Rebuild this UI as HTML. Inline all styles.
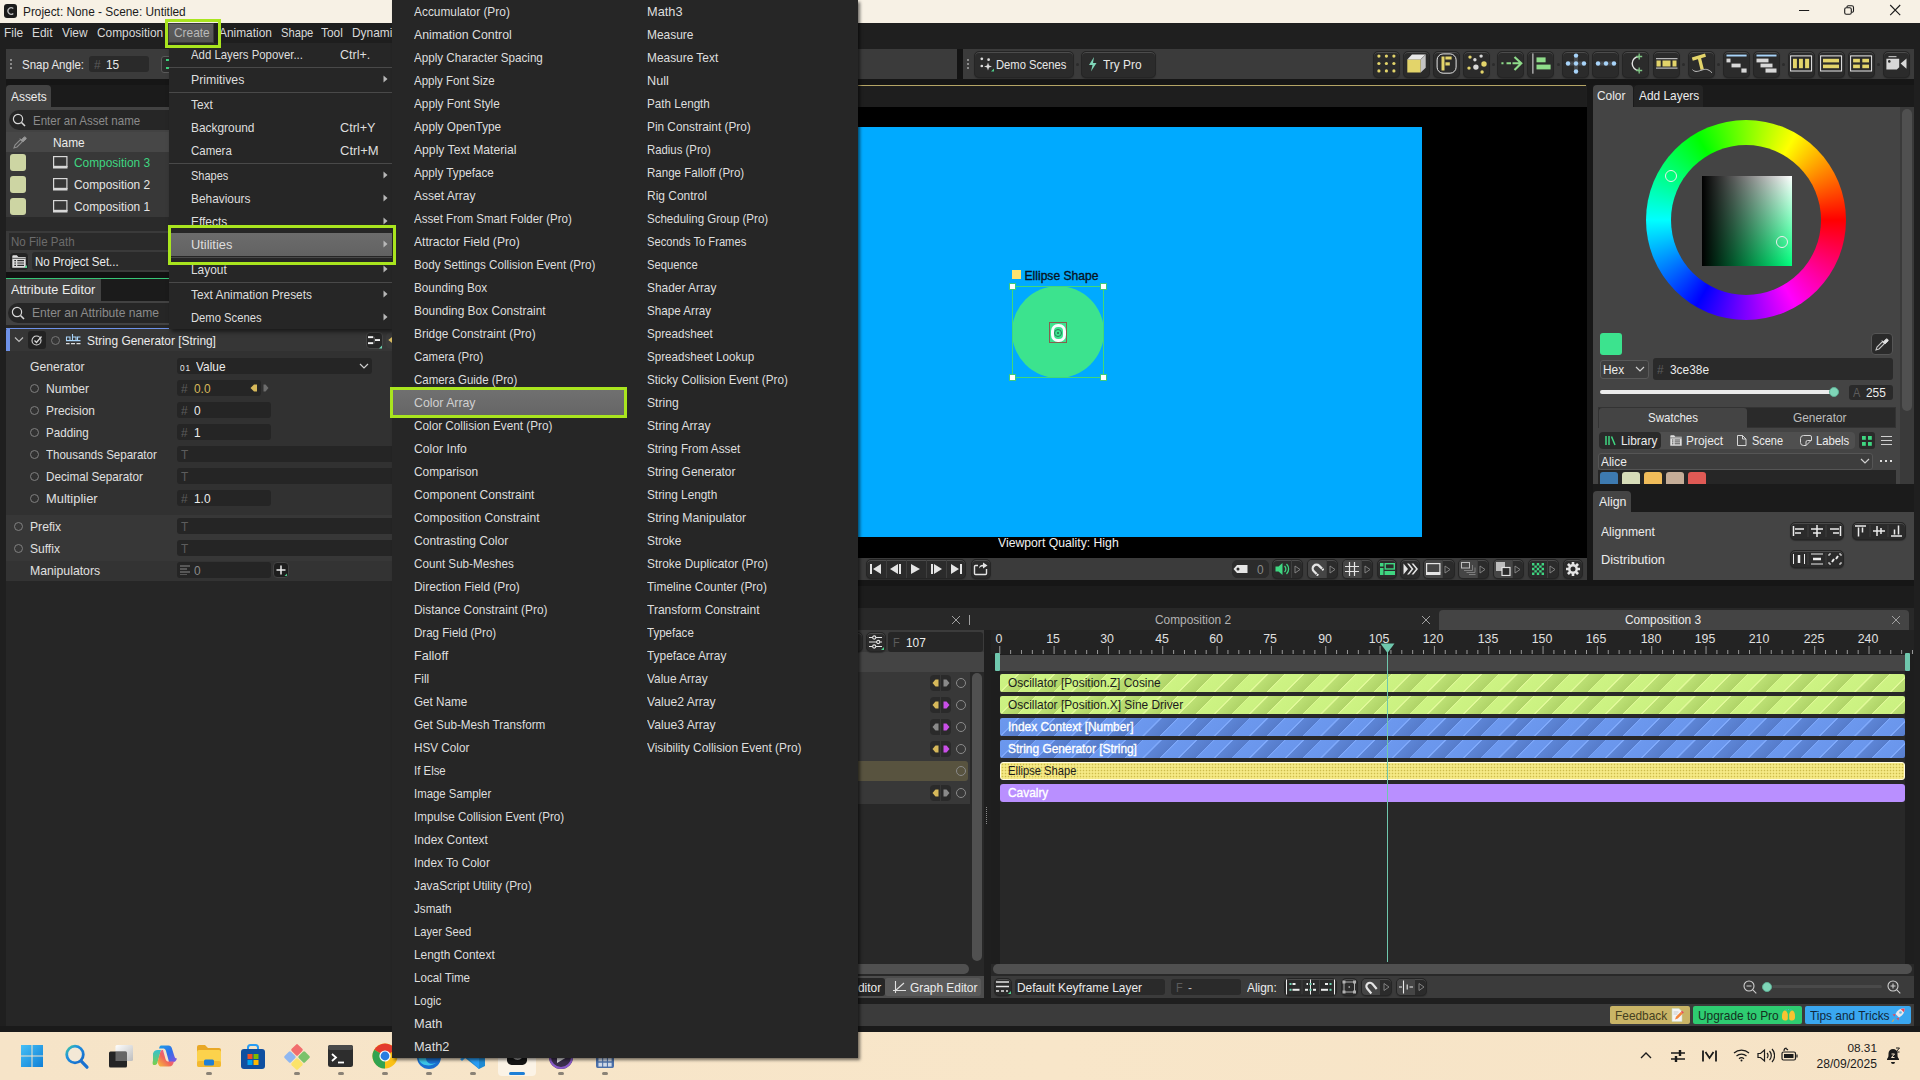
<!DOCTYPE html>
<html><head><meta charset="utf-8"><title>Cavalry</title>
<style>
*{box-sizing:border-box;margin:0;padding:0}
html,body{width:1920px;height:1080px;overflow:hidden;background:#1f1f1f;font-family:"Liberation Sans",sans-serif;font-size:13px;color:#e4e4e4}
.a{position:absolute}
.t{position:absolute;white-space:nowrap;line-height:16px;transform-origin:0 50%;transform:scaleX(.915);margin-top:1px}
</style></head><body>

<!-- ===== window background ===== -->
<div class="a" style="left:0;top:23px;width:1920px;height:1009px;background:#1f1f1f"></div>
<!-- title bar -->
<div class="a" style="left:0;top:0;width:1920px;height:23px;background:#f7f1e5"></div>
<svg class="a" style="left:4px;top:4px" width="13" height="14" viewBox="0 0 13 14"><rect x="0" y="0" width="13" height="14" rx="3" fill="#1b1b1b"/><path d="M9.3 4.6 A3.2 3.2 0 1 0 9.3 9.4" fill="none" stroke="#bbb" stroke-width="1.3"/></svg>
<div class="t" style="left:23px;top:3px;font-size:12.5px;color:#1b1b1b;transform:scaleX(0.948)">Project: None - Scene: Untitled</div>
<svg class="a" style="left:1797px;top:0px" width="110" height="20" viewBox="0 0 110 20" fill="none" stroke="#1b1b1b" stroke-width="1"><path d="M2 10.500h10.200"/><rect x="47.700" y="7.700" width="6.600" height="6.600" rx="1.600" stroke-width="1.100"/><path d="M50 7.200V6.900a1.200 1.200 0 0 1 1.200 -1.200h3.600a1.700 1.700 0 0 1 1.700 1.700v3.700a1.200 1.200 0 0 1 -1.200 1.200h-0.400" stroke-width="1.100"/><path d="M93.200 5l10 10.200M103.200 5l-10 10.200" stroke-width="1.100"/></svg>
<!-- menu bar -->
<div class="a" style="left:0;top:23px;width:1920px;height:20px;background:#1f1f1f"></div>
<div class="t mb" style="left:4px;top:24px">File</div>
<div class="t mb" style="left:32px;top:24px">Edit</div>
<div class="t mb" style="left:62px;top:24px">View</div>
<div class="t mb" style="left:97px;top:24px">Composition</div>
<div class="t mb" style="left:219px;top:24px">Animation</div>
<div class="t mb" style="left:281px;top:24px;transform:scaleX(0.86)">Shape</div>
<div class="t mb" style="left:321px;top:24px">Tool</div>
<div class="t mb" style="left:352px;top:24px">Dynami</div>
<!-- toolbars -->
<div class="a" style="left:6px;top:79px;width:1908px;height:6px;background:#161616"></div>
<div class="a" style="left:6px;top:49px;width:951px;height:30px;background:#3b3b3b"></div>
<div class="a" style="left:963px;top:49px;width:951px;height:30px;background:#3b3b3b"></div>
<div class="a" style="left:957px;top:49px;width:6px;height:30px;background:#141414"></div>
<!-- Snap angle -->
<div class="a" style="left:10px;top:59px;width:2px;height:2px;background:#8a8a8a;box-shadow:0 4px 0 #8a8a8a,0 8px 0 #8a8a8a"></div>
<div class="t" style="left:22px;top:56px;color:#e8e8e8;transform:scaleX(.885)">Snap Angle:</div>
<div class="a" style="left:89px;top:56px;width:60px;height:16px;background:#2a2a2a;border-radius:3px"></div>
<div class="t" style="left:94px;top:56px;color:#5a5a5a">#</div>
<div class="t" style="left:106px;top:56px;color:#e8e8e8">15</div>
<div class="a" style="left:161px;top:56px;width:20px;height:17px;border:1px solid #5a5a5a;border-radius:3px;background:#2c2c2c"></div>
<div class="a" style="left:166px;top:59px;width:3px;height:2px;background:#3fd681"></div><div class="a" style="left:166px;top:67px;width:3px;height:2px;background:#3fd681"></div>
<!-- Demo Scenes / Try Pro -->
<div class="a" style="left:967px;top:59px;width:2px;height:2px;background:#8a8a8a;box-shadow:0 4px 0 #8a8a8a,0 8px 0 #8a8a8a"></div>
<div class="a btn" style="left:974px;top:51px;width:100px;height:27px"></div>
<svg class="a" style="left:979px;top:56px" width="16" height="16" viewBox="0 0 16 16"><g fill="#dcdcdc"><circle cx="2.800" cy="2.800" r="1.350"/><circle cx="9.600" cy="3.700" r="1.350"/><circle cx="2.800" cy="10" r="1.350"/><path d="M9 6.500l1 3 3 1-3 1-1 3-1-3-3-1 3-1z"/></g><path d="M15 12.500v3h-3z" fill="#4fd08d"/></svg>
<div class="t" style="left:996px;top:56px;color:#e8e8e8;transform:scaleX(0.862)">Demo Scenes</div>
<div class="a" style="left:1076px;top:63px;width:3px;height:3px;border-radius:2px;background:#2b2b2b"></div>
<div class="a btn" style="left:1081px;top:51px;width:75px;height:27px"></div>
<svg class="a" style="left:1088px;top:57px" width="10" height="15" viewBox="0 0 10 15"><path d="M6 0L1 8h3.500L3 14.500 8.500 6H5z" fill="#7fd6b8"/></svg>
<div class="t" style="left:1103px;top:56px;color:#e8e8e8">Try Pro</div>
<style>
.mb{color:#d9d9d9;font-size:13px}
.btn{background:#2b2b2b;border:1px solid #252525;border-radius:5px;box-shadow:inset 0 1px 0 #4c4c4c,0 1px 1px #2e2e2e}
.mi{color:#dedede;font-size:13px}
</style>

<!-- ===== LEFT PANEL ===== -->
<!-- Assets tab -->
<div class="a" style="left:6px;top:85px;width:400px;height:22px;background:#1b1b1b"></div>
<div class="a" style="left:6px;top:85px;width:45px;height:22px;background:#424242;border-radius:4px 4px 0 0"></div>
<div class="t" style="left:11px;top:88px;color:#ececec">Assets</div>
<div class="a" style="left:6px;top:107px;width:400px;height:111px;background:#424242"></div>
<!-- search -->
<div class="a" style="left:9px;top:110px;width:400px;height:20px;background:#262626;border-radius:10px"></div>
<svg class="a" style="left:12px;top:113px" width="15" height="15" viewBox="0 0 15 15"><circle cx="6" cy="6" r="4.600" fill="none" stroke="#d8d8d8" stroke-width="1.200"/><path d="M9.500 9.500l3.500 3.500" stroke="#d8d8d8" stroke-width="1.600"/></svg>
<div class="t" style="left:33px;top:112px;color:#8b8b8b;transform:scaleX(0.888)">Enter an Asset name</div>
<!-- header -->
<div class="a" style="left:6px;top:132px;width:400px;height:20px;background:#474747"></div>
<svg class="a" style="left:13px;top:135px" width="14" height="14" viewBox="0 0 14 14"><path d="M1 13l1-3 5.500-5.500 2 2L4 12z" fill="none" stroke="#8d8d8d" stroke-width="1.100"/><path d="M7 3.500l3.500 3.500M8.500 5l2.200-2.600a1.400 1.400 0 0 1 2 2L10 6.500z" fill="#9a9a9a" stroke="#9a9a9a" stroke-width="1"/></svg>
<div class="t" style="left:53px;top:134px;color:#ececec">Name</div>
<!-- rows -->
<div class="a" style="left:6px;top:152px;width:400px;height:65px;background:#383838"></div>
<div class="a sw" style="left:10px;top:154px"></div>
<div class="a sw" style="left:10px;top:176px"></div>
<div class="a sw" style="left:10px;top:198px"></div>
<svg class="a" style="left:53px;top:156px" width="15" height="13" viewBox="0 0 15 13"><rect x="0.600" y="0.600" width="13.300" height="9.800" fill="none" stroke="#d8d8d8" stroke-width="1.200"/><rect x="0" y="10" width="14.500" height="2.500" fill="#d8d8d8"/></svg>
<svg class="a" style="left:53px;top:178px" width="15" height="13" viewBox="0 0 15 13"><rect x="0.600" y="0.600" width="13.300" height="9.800" fill="none" stroke="#d8d8d8" stroke-width="1.200"/><rect x="0" y="10" width="14.500" height="2.500" fill="#d8d8d8"/></svg>
<svg class="a" style="left:53px;top:200px" width="15" height="13" viewBox="0 0 15 13"><rect x="0.600" y="0.600" width="13.300" height="9.800" fill="none" stroke="#d8d8d8" stroke-width="1.200"/><rect x="0" y="10" width="14.500" height="2.500" fill="#d8d8d8"/></svg>
<div class="t" style="left:74px;top:154px;color:#3fd681">Composition 3</div>
<div class="t" style="left:74px;top:176px;color:#e6e6e6">Composition 2</div>
<div class="t" style="left:74px;top:198px;color:#e6e6e6">Composition 1</div>
<div class="a" style="left:6px;top:217px;width:400px;height:55px;background:#2a2a2a"></div>
<!-- file path -->
<div class="a" style="left:6px;top:231px;width:400px;height:41px;background:#3a3a3a"></div>
<div class="a" style="left:9px;top:233px;width:400px;height:17px;background:#2a2a2a"></div>
<div class="t" style="left:11px;top:233px;color:#6c6c6c;transform:scaleX(0.889)">No File Path</div>
<div class="a" style="left:9px;top:252px;width:20px;height:19px;background:#232323;border:1px solid #3c3c3c;border-radius:4px"></div>
<svg class="a" style="left:12px;top:255px" width="15" height="13" viewBox="0 0 15 13"><path d="M0.300 12.700V1.300a1 1 0 0 1 1-1h3.500l1.500 1.700h7.400v10.700z" fill="#dedede"/><path d="M0.300 3.300h13.400" stroke="#2a2a2a" stroke-width=".8"/><path d="M2.300 5.700h1.700M5.300 5.700h6.700M2.300 8h1.700M5.300 8h6.700M2.300 10.300h1.700M5.300 10.300h6.700" stroke="#2a2a2a" stroke-width="1.200"/><path d="M15 10V13h-3z" fill="#4fd08d"/></svg>
<div class="a" style="left:32px;top:252px;width:380px;height:18px;background:#2a2a2a;border-radius:3px"></div>
<div class="t" style="left:35px;top:253px;color:#ececec;transform:scaleX(0.884)">No Project Set...</div>
<!-- Attribute Editor -->
<div class="a" style="left:6px;top:272px;width:400px;height:6px;background:#121212"></div>
<div class="a" style="left:6px;top:278px;width:400px;height:1px;background:#36c576"></div>
<div class="a" style="left:6px;top:279px;width:400px;height:22px;background:#1b1b1b"></div>
<div class="a" style="left:6px;top:279px;width:95px;height:22px;background:#424242"></div>
<div class="t" style="left:11px;top:281px;color:#ececec;transform:scaleX(0.98)">Attribute Editor</div>
<div class="a" style="left:6px;top:301px;width:400px;height:731px;background:#262626"></div>
<div class="a" style="left:6px;top:301px;width:400px;height:24px;background:#424242"></div>
<div class="a" style="left:8px;top:303px;width:400px;height:20px;background:#262626;border-radius:10px"></div>
<svg class="a" style="left:11px;top:306px" width="15" height="15" viewBox="0 0 15 15"><circle cx="6" cy="6" r="4.600" fill="none" stroke="#d8d8d8" stroke-width="1.200"/><path d="M9.500 9.500l3.500 3.500" stroke="#d8d8d8" stroke-width="1.600"/></svg>
<div class="t" style="left:32px;top:304px;color:#8b8b8b;transform:scaleX(0.93)">Enter an Attribute name</div>
<!-- String Generator header row -->
<div class="a" style="left:6px;top:328px;width:400px;height:23px;background:#363636;border-top:1px solid #6e92e8"></div>
<div class="a" style="left:6px;top:328px;width:4px;height:23px;background:#6e92e8;border-radius:3px 0 0 0"></div>
<svg class="a" style="left:14px;top:336px" width="10" height="8" viewBox="0 0 10 8"><path d="M1 1.500l4 4 4-4" fill="none" stroke="#bdbdbd" stroke-width="1.200"/></svg>
<div class="a" style="left:28px;top:331px;width:18px;height:18px;background:#222;border-radius:3px"></div>
<svg class="a" style="left:31px;top:334px" width="12" height="12" viewBox="0 0 12 12"><circle cx="5.500" cy="6.500" r="4.500" fill="none" stroke="#d8d8d8" stroke-width="1.100"/><path d="M3.500 6.500l2 2 5-6" fill="none" stroke="#d8d8d8" stroke-width="1.300"/></svg>
<div class="a" style="left:50.500px;top:335.500px;width:9px;height:9px;border:1.200px solid #777;border-radius:5px"></div>
<svg class="a" style="left:65px;top:333px" width="16" height="13" viewBox="0 0 16 13" fill="none"><path d="M5 3.500v4M5 4h-3.500v3.500h3.500M7.500 1v6.500h3.500v-3.500h-3.500M15.500 4h-3v3.500h3M1 7.600h14.500" stroke="#a8d4fa" stroke-width="1.100"/><path d="M1 10.600h3.600M6 10.600h4M11.500 10.600h4" stroke="#dcdcdc" stroke-width="1.100"/></svg>
<div class="t" style="left:87px;top:332px;color:#ececec">String Generator [String]</div>
<div class="a" style="left:365.500px;top:331.500px;width:17px;height:17px;background:#262626;border:1px solid #454545;border-radius:4px"></div>
<svg class="a" style="left:367px;top:335px" width="16" height="14" viewBox="0 0 16 14"><rect x="1" y="1.200" width="5.200" height="1.900" fill="#f0f0f0"/><rect x="1" y="7.200" width="5.200" height="1.900" fill="#f0f0f0"/><rect x="8" y="4.100" width="5" height="1.900" fill="#f0f0f0"/><path d="M6.300 2.200h1v6h-1" fill="none" stroke="#6a6a6a" stroke-width=".8"/><path d="M15 10.500V13.500h-3z" fill="#6fd6b4"/></svg>
<div class="a" style="left:386px;top:332px;width:12px;height:17px;background:#3a3a3a;border-radius:5px 0 0 5px"></div>
<svg class="a" style="left:388px;top:336px" width="6" height="8" viewBox="0 0 6 8"><path d="M5 0.300v7.400L0.300 4z" fill="#d9bd62"/></svg>
<!-- attr body -->
<div class="a" style="left:6px;top:351px;width:400px;height:164px;background:#313131"></div>
<div class="a" style="left:6px;top:515px;width:400px;height:46px;background:#373737"></div>
<div class="a" style="left:6px;top:561px;width:400px;height:20px;background:#333"></div>
<div class="t al" style="left:30px;top:358px;transform:scaleX(0.932)">Generator</div>
<div class="t al" style="left:46px;top:380px;transform:scaleX(0.93)">Number</div>
<div class="t al" style="left:46px;top:402px">Precision</div>
<div class="t al" style="left:46px;top:424px;transform:scaleX(0.894)">Padding</div>
<div class="t al" style="left:46px;top:446px;transform:scaleX(0.886)">Thousands Separator</div>
<div class="t al" style="left:46px;top:468px;transform:scaleX(0.9)">Decimal Separator</div>
<div class="t al" style="left:46px;top:490px;transform:scaleX(0.992)">Multiplier</div>
<div class="t al" style="left:30px;top:518px;transform:scaleX(0.936)">Prefix</div>
<div class="t al" style="left:30px;top:540px;transform:scaleX(0.927)">Suffix</div>
<div class="t al" style="left:30px;top:562px;transform:scaleX(0.942)">Manipulators</div>
<div class="a rd" style="left:30px;top:384px"></div>
<div class="a rd" style="left:30px;top:406px"></div>
<div class="a rd" style="left:30px;top:428px"></div>
<div class="a rd" style="left:30px;top:450px"></div>
<div class="a rd" style="left:30px;top:472px"></div>
<div class="a rd" style="left:30px;top:494px"></div>
<div class="a rd" style="left:14px;top:522px"></div>
<div class="a rd" style="left:14px;top:544px"></div>
<!-- fields -->
<div class="a fd" style="left:177px;top:358px;width:195px"></div>
<div class="t" style="left:180px;top:359px;color:#e8e8e8;font-size:9px;letter-spacing:1px">01</div>
<div class="t" style="left:196px;top:358px;color:#ececec">Value</div>
<svg class="a" style="left:359px;top:363px" width="10" height="7" viewBox="0 0 10 7"><path d="M1 1l4 4 4-4" fill="none" stroke="#d0d0d0" stroke-width="1.200"/></svg>
<div class="a fd" style="left:177px;top:380px;width:84px"></div>
<div class="t hs" style="left:181px;top:380px">#</div><div class="t" style="left:194px;top:380px;color:#d6b85a">0.0</div>
<svg class="a" style="left:250px;top:384px" width="8" height="8" viewBox="0 0 8 8"><path d="M7 0.500v7H4L0.500 4 4 0.500z" fill="#d6b85a"/></svg>
<svg class="a" style="left:263px;top:384px" width="6" height="8" viewBox="0 0 6 8"><path d="M0.500 0.500v7h2L5.500 4 2.500 0.500z" fill="#6c6c6c"/></svg>
<div class="a fd" style="left:177px;top:402px;width:94px"></div>
<div class="t hs" style="left:181px;top:402px">#</div><div class="t" style="left:194px;top:402px;color:#ececec">0</div>
<div class="a fd" style="left:177px;top:424px;width:94px"></div>
<div class="t hs" style="left:181px;top:424px">#</div><div class="t" style="left:194px;top:424px;color:#ececec">1</div>
<div class="a fd" style="left:177px;top:446px;width:240px"></div>
<div class="t hs" style="left:181px;top:446px">T</div>
<div class="a fd" style="left:177px;top:468px;width:240px"></div>
<div class="t hs" style="left:181px;top:468px">T</div>
<div class="a fd" style="left:177px;top:490px;width:94px"></div>
<div class="t hs" style="left:181px;top:490px">#</div><div class="t" style="left:194px;top:490px;color:#ececec">1.0</div>
<div class="a fd" style="left:177px;top:518px;width:240px"></div>
<div class="t hs" style="left:181px;top:518px">T</div>
<div class="a fd" style="left:177px;top:540px;width:240px"></div>
<div class="t hs" style="left:181px;top:540px">T</div>
<div class="a fd" style="left:177px;top:562px;width:94px"></div>
<svg class="a" style="left:180px;top:565px" width="10" height="10" viewBox="0 0 10 10"><path d="M0 1h10M0 4h7M0 7h10M0 10h7" stroke="#8a8a8a" stroke-width="1"/></svg>
<div class="t" style="left:194px;top:562px;color:#8a8a8a">0</div>
<div class="a" style="left:273px;top:562px;width:16px;height:16px;background:#1e1e1e;border:1px solid #444;border-radius:4px"></div>
<svg class="a" style="left:276px;top:565px" width="11" height="11" viewBox="0 0 11 11"><path d="M5 0.500v9M0.500 5h9" stroke="#eee" stroke-width="1.500"/><path d="M11 8.500V11h-2.500z" fill="#4fd08d"/></svg>
<style>
.sw{width:16px;height:17px;background:#cdd5a3;border-radius:3px}
.al{color:#e0e0e0}
.rd{width:9px;height:9px;border:1px solid #808080;border-radius:5px}
.fd{height:16px;background:#252525;border-radius:3px}
.hs{color:#5c5c5c;font-size:13px}
</style>

<!-- ===== VIEWPORT ===== -->
<div class="a" style="left:1587px;top:85px;width:6px;height:495px;background:#171717"></div>
<div class="a" style="left:858px;top:580px;width:1056px;height:6px;background:#161616"></div>
<div class="a" style="left:858px;top:586px;width:1056px;height:22px;background:#1c1c1c"></div>

<div class="a" style="left:858px;top:85px;width:728px;height:1px;background:#b5a566"></div>
<div class="a" style="left:858px;top:86px;width:728px;height:21px;background:#1e1e1e"></div>
<div class="a" style="left:858px;top:107px;width:729px;height:451px;background:#000"></div>
<div class="a" style="left:858px;top:127px;width:564px;height:410px;background:#00aaff"></div>
<!-- ellipse -->
<div class="a" style="left:1012px;top:286px;width:91.500px;height:91.500px;border-radius:46px;background:#3ce38e"></div>
<div class="a" style="left:1012px;top:286px;width:92px;height:92px;border:1px solid #40d878"></div>
<div class="a hd" style="left:1009px;top:283px"></div><div class="a hd" style="left:1100px;top:283px"></div>
<div class="a hd" style="left:1009px;top:374px"></div><div class="a hd" style="left:1100px;top:374px"></div>
<div class="a" style="left:1012px;top:270px;width:9px;height:9px;background:#ffe36e"></div>
<div class="t" style="left:1024.500px;top:267px;color:#08141f;font-size:12.100px;transform:none;-webkit-text-stroke:.35px #08141f">Ellipse Shape</div>
<div class="a" style="left:1049px;top:322px;width:18px;height:21px;background:#3ce38e;border:1px solid #86604e"></div>
<div class="a" style="left:1050.500px;top:323.500px;width:15px;height:18px;border:3px solid #fbfbff;border-radius:7px;background:#3ce38e"></div>
<div class="a" style="left:1054px;top:328.500px;width:8px;height:8px;border:1px solid #2a7a5a;border-radius:4px"></div>
<div class="a" style="left:1057px;top:331.500px;width:2px;height:2px;background:#2a6a50;border-radius:1px"></div>
<div class="t" style="left:998px;top:534px;color:#f2f2f2;transform:scaleX(.94)">Viewport Quality: High</div>
<!-- controls bar -->
<div class="a" style="left:858px;top:558px;width:729px;height:22px;background:#3b3b3b"></div>
<div class="a btn" style="left:866px;top:559px;width:100px;height:20px"></div>
<div class="a" style="left:886px;top:560px;width:1px;height:18px;background:#3e3e3e;box-shadow:20px 0 0 #3e3e3e,40px 0 0 #3e3e3e,60px 0 0 #3e3e3e"></div>
<svg class="a" style="left:866px;top:559px" width="100" height="20" viewBox="0 0 100 20" fill="#e4e4e4"><path d="M4 5h2v10H4zM15 5v10L7 10z"/><path d="M35 5h-2v10h2zM32 5v10L24 10z"/><path d="M45 5v10l9-5z"/><path d="M65 5h2v10h-2zM68 5v10l8-5z"/><path d="M94 5h2v10h-2zM85 5v10l8-5z"/></svg>
<div class="a btn" style="left:971px;top:559px;width:20px;height:20px"></div>
<svg class="a" style="left:973px;top:562px" width="16" height="14" viewBox="0 0 16 14"><path d="M5 3.500H2.500a1 1 0 0 0-1 1v7a1 1 0 0 0 1 1h10a1 1 0 0 0 1-1V7" fill="none" stroke="#e4e4e4" stroke-width="1.400"/><path d="M6 6.500c0-2.500 1.500-3.800 4-3.800V0.500L14.500 3.500 10 6.500V4.500c-2 0-3 .5-4 2z" fill="#e4e4e4"/></svg>
<!-- right group -->
<div class="a btn" style="left:1232px;top:560px;width:37px;height:18px;border-color:#2b2b2b;box-shadow:none"></div>
<svg class="a" style="left:1233px;top:564px" width="15" height="10" viewBox="0 0 15 10"><path d="M0.500 5L4 1h10.500v8H4z" fill="#e4e4e4"/><circle cx="5" cy="5" r="1.500" fill="#2b2b2b"/></svg>
<div class="t" style="left:1257px;top:561px;color:#8a8a8a">0</div>
<div class="a btn" style="left:1272px;top:559px;width:31px;height:20px"></div><div class="a vs" style="left:1291px;top:560px"></div>
<svg class="a" style="left:1275px;top:562px" width="15" height="14" viewBox="0 0 15 14"><path d="M0.500 4.500h3L7.500 1v12l-4-3.500h-3z" fill="#3fd681"/><path d="M9.500 4a4 4 0 0 1 0 6M11.500 2a7 7 0 0 1 0 10" fill="none" stroke="#3fd681" stroke-width="1.300"/></svg>
<div class="a btn" style="left:1307px;top:559px;width:31px;height:20px"></div><div class="a" style="left:1308px;top:560px;width:18px;height:18px;background:#454545;border-radius:4px 0 0 4px"></div><div class="a vs" style="left:1326px;top:560px"></div>
<svg class="a" style="left:1310px;top:562px" width="14" height="14" viewBox="0 0 14 14"><g transform="rotate(-45 7 7)" fill="none"><path d="M3.200 12.500V6.300a3.800 3.800 0 0 1 7.600 0V12.500" stroke="#e4e4e4" stroke-width="2.300"/><path d="M2 10.500h2.400M9.600 10.500h2.400" stroke="#454545" stroke-width=".7"/></g></svg>
<div class="a btn" style="left:1342px;top:559px;width:31px;height:20px"></div><div class="a" style="left:1343px;top:560px;width:18px;height:18px;background:#454545;border-radius:4px 0 0 4px"></div><div class="a vs" style="left:1361px;top:560px"></div>
<svg class="a" style="left:1345px;top:562px" width="14" height="14" viewBox="0 0 14 14"><path d="M4.500 0v14M9.500 0v14M0 4.500h14M0 9.500h14" stroke="#e4e4e4" stroke-width="1.200"/></svg>
<div class="a btn" style="left:1377px;top:559px;width:20px;height:20px"></div>
<svg class="a" style="left:1380px;top:563px" width="15" height="12" viewBox="0 0 15 12"><rect x="0" y="0" width="3.500" height="3.500" fill="#3fd681"/><rect x="0" y="5" width="3.500" height="7" fill="#3fd681"/><rect x="5.200" y="0.700" width="9.100" height="5.300" fill="none" stroke="#3fd681" stroke-width="1.400"/><rect x="4.500" y="8" width="10.500" height="4" fill="#3fd681"/></svg>
<div class="a btn" style="left:1400px;top:559px;width:20px;height:20px"></div>
<svg class="a" style="left:1403px;top:563px" width="15" height="12" viewBox="0 0 15 12"><path d="M0.500 0.500L5 6 0.500 11.500zM4 0.500h2L10.500 6 6 11.500H4L8.500 6zM8.500 0.500h2L15 6l-4.500 5.500h-2L13 6z" fill="#e4e4e4"/></svg>
<div class="a btn" style="left:1423px;top:559px;width:32px;height:20px"></div><div class="a" style="left:1424px;top:560px;width:18px;height:18px;background:#454545;border-radius:4px 0 0 4px"></div><div class="a vs" style="left:1442px;top:560px"></div>
<svg class="a" style="left:1426px;top:563px" width="15" height="12" viewBox="0 0 15 12"><rect x="0.600" y="0.600" width="13.300" height="9" fill="none" stroke="#e4e4e4" stroke-width="1.200"/><rect x="0" y="9.500" width="14.500" height="2.500" fill="#e4e4e4"/></svg>
<div class="a btn" style="left:1458px;top:559px;width:31px;height:20px"></div><div class="a" style="left:1459px;top:560px;width:18px;height:18px;background:#454545;border-radius:4px 0 0 4px"></div><div class="a vs" style="left:1477px;top:560px"></div>
<svg class="a" style="left:1461px;top:562px" width="15" height="13" viewBox="0 0 15 13" fill="none"><rect x="0.500" y="0.500" width="8" height="5.500" stroke="#bdbdbd"/><path d="M3 8.500h8.500V3M5.500 10.500H14V5.500M8 12.500h6.500" stroke="#7e7e7e"/></svg>
<div class="a btn" style="left:1493px;top:559px;width:31px;height:20px"></div><div class="a" style="left:1494px;top:560px;width:18px;height:18px;background:#454545;border-radius:4px 0 0 4px"></div><div class="a vs" style="left:1512px;top:560px"></div>
<svg class="a" style="left:1496px;top:562px" width="15" height="14" viewBox="0 0 15 14"><rect x="0" y="0" width="9" height="9" fill="#bdbdbd"/><rect x="6" y="5.500" width="8" height="8" fill="#2b2b2b" stroke="#e4e4e4" stroke-width="1.200"/></svg>
<div class="a btn" style="left:1528px;top:559px;width:31px;height:20px"></div><div class="a vs" style="left:1547px;top:560px"></div>
<svg class="a" style="left:1532px;top:563px" width="12" height="12" viewBox="0 0 12 12" fill="#3fd681"><path d="M0 0h2.400v2.400H0zM4.800 0h2.400v2.400H4.800zM9.600 0H12v2.400H9.600zM2.400 2.400h2.400v2.400H2.400zM7.200 2.400h2.400v2.400H7.200zM0 4.800h2.400v2.400H0zM4.800 4.800h2.400v2.400H4.800zM9.600 4.800H12v2.400H9.600zM2.400 7.200h2.400v2.400H2.400zM7.200 7.200h2.400v2.400H7.200zM0 9.600h2.400V12H0zM4.800 9.600h2.400V12H4.800zM9.600 9.600H12V12H9.600z"/></svg>
<div class="a btn" style="left:1563px;top:559px;width:20px;height:20px"></div>
<svg class="a" style="left:1566px;top:562px" width="14" height="14" viewBox="0 0 14 14"><g fill="#e4e4e4"><rect x="5.700" y="-0.200" width="2.600" height="3.400" rx=".5" transform="rotate(0 7 7)"/><rect x="5.700" y="-0.200" width="2.600" height="3.400" rx=".5" transform="rotate(45 7 7)"/><rect x="5.700" y="-0.200" width="2.600" height="3.400" rx=".5" transform="rotate(90 7 7)"/><rect x="5.700" y="-0.200" width="2.600" height="3.400" rx=".5" transform="rotate(135 7 7)"/><rect x="5.700" y="-0.200" width="2.600" height="3.400" rx=".5" transform="rotate(180 7 7)"/><rect x="5.700" y="-0.200" width="2.600" height="3.400" rx=".5" transform="rotate(225 7 7)"/><rect x="5.700" y="-0.200" width="2.600" height="3.400" rx=".5" transform="rotate(270 7 7)"/><rect x="5.700" y="-0.200" width="2.600" height="3.400" rx=".5" transform="rotate(315 7 7)"/></g><circle cx="7" cy="7" r="3.700" fill="none" stroke="#e4e4e4" stroke-width="2.400"/></svg>
<svg class="a" style="left:1294px;top:565px" width="262" height="9" viewBox="0 0 262 9" fill="none" stroke="#8a8a8a" stroke-width="0.900"><path d="M1 1v7l5-3.500z"/><path d="M36 1v7l5-3.500z"/><path d="M71 1v7l5-3.500z"/><path d="M151 1v7l5-3.500z"/><path d="M186 1v7l5-3.500z"/><path d="M221 1v7l5-3.500z"/><path d="M256 1v7l5-3.500z"/></svg>
<style>
.hd{width:7px;height:7px;background:#fff;border:1px solid #3ec97d}
.vs{width:1px;height:18px;background:#3e3e3e}
</style>

<!-- ===== RIGHT PANEL ===== -->
<div class="a" style="left:1593px;top:85px;width:321px;height:22px;background:#1b1b1b"></div>
<div class="a" style="left:1593px;top:85px;width:40px;height:22px;background:#444;border-radius:4px 4px 0 0"></div>
<div class="a" style="left:1634px;top:85px;width:69px;height:22px;background:#242424;border-radius:4px 4px 0 0"></div>
<div class="t" style="left:1597px;top:87px;color:#ececec">Color</div>
<div class="t" style="left:1639px;top:87px;color:#ececec">Add Layers</div>
<div class="a" style="left:1593px;top:107px;width:307px;height:378px;background:#444"></div>
<div class="a" style="left:1900px;top:107px;width:14px;height:378px;background:#3a3a3a"></div>
<div class="a" style="left:1902px;top:109px;width:10px;height:302px;background:#505050;border-radius:5px"></div>
<!-- color wheel -->
<div class="a" style="left:1646px;top:120px;width:200px;height:200px;border-radius:100px;background:conic-gradient(from 90deg,#ff0000,#ff00ff,#0000ff,#00ffff,#00ff00,#ffff00,#ff0000)"></div>
<div class="a" style="left:1671px;top:145px;width:150px;height:150px;border-radius:75px;background:#444"></div>
<div class="a" style="left:1702px;top:176px;width:90px;height:90px;background:linear-gradient(to right,#000,rgba(0,0,0,0)),linear-gradient(to bottom,#fff,#00ff7d)"></div>
<div class="a" style="left:1665px;top:170px;width:12px;height:12px;border:1px solid #eee;border-radius:6px"></div>
<div class="a" style="left:1776px;top:236px;width:12px;height:12px;border:1px solid #eee;border-radius:6px"></div>
<!-- swatch + eyedropper -->
<div class="a" style="left:1600px;top:333px;width:22px;height:22px;border-radius:3px;background:#3ce38e"></div>
<div class="a" style="left:1871px;top:333px;width:22px;height:22px;border-radius:4px;background:#2a2a2a;border:1px solid #555"></div>
<svg class="a" style="left:1875px;top:337px" width="14" height="14" viewBox="0 0 14 14"><path d="M1 13l1-3 5.500-5.500 2 2L4 12z" fill="none" stroke="#c8c8c8" stroke-width="1.100"/><path d="M7 3.500l3.500 3.500M8.500 5l2.200-2.600a1.400 1.400 0 0 1 2 2L10 6.500z" fill="#e4e4e4" stroke="#e4e4e4" stroke-width="1"/></svg>
<!-- hex -->
<div class="a" style="left:1600px;top:360px;width:49px;height:19px;background:#3d3d3d;border:1px solid #595959;border-radius:3px"></div>
<div class="t" style="left:1603px;top:361px;color:#ececec">Hex</div>
<svg class="a" style="left:1635px;top:366px" width="10" height="7" viewBox="0 0 10 7"><path d="M1 1l4 4 4-4" fill="none" stroke="#d0d0d0" stroke-width="1.200"/></svg>
<div class="a" style="left:1653px;top:358px;width:240px;height:22px;background:#2a2a2a;border-radius:3px"></div>
<div class="t hs" style="left:1657px;top:361px">#</div>
<div class="t" style="left:1670px;top:361px;color:#ececec">3ce38e</div>
<!-- alpha slider -->
<div class="a" style="left:1600px;top:390px;width:234px;height:4px;border-radius:2px;background:#ececec"></div>
<div class="a" style="left:1829px;top:387px;width:10px;height:10px;border-radius:5px;background:#7fd6b8;border:1.500px solid #5fae94"></div>
<div class="a" style="left:1849px;top:385px;width:44px;height:15px;background:#2a2a2a;border-radius:3px"></div>
<div class="t hs" style="left:1853px;top:384px;font-size:12px">A</div>
<div class="t" style="left:1866px;top:384px;color:#ececec">255</div>
<!-- swatches tabs -->
<div class="a" style="left:1598px;top:407px;width:298px;height:21px;background:#2a2a2a;border:1px solid #333"></div>
<div class="a" style="left:1599px;top:408px;width:148px;height:20px;background:#444;border-radius:3px 3px 0 0"></div>
<div class="t" style="left:1648px;top:409px;color:#ececec;transform:scaleX(0.887)">Swatches</div>
<div class="t" style="left:1793px;top:409px;color:#bdbdbd">Generator</div>
<!-- library row -->
<div class="a" style="left:1599px;top:432px;width:256px;height:17px;background:#4f4f4f;border-radius:4px"></div>
<div class="a" style="left:1599px;top:432px;width:62px;height:17px;background:#2a2a2a;border-radius:4px"></div>
<svg class="a" style="left:1605px;top:435px" width="11" height="11" viewBox="0 0 11 11"><path d="M1 1v9M4 1v9M6.500 1.500L10 10" stroke="#3fd681" stroke-width="1.500"/></svg>
<div class="t" style="left:1621px;top:432px;color:#ececec">Library</div>
<svg class="a" style="left:1670px;top:435px" width="12" height="11" viewBox="0 0 12 11"><path d="M0.300 10.700V1.100a.8.800 0 0 1 .8-.8h3l1.200 1.400h6.400v9z" fill="#dedede"/><path d="M0.300 2.900h11.400" stroke="#4f4f4f" stroke-width=".7"/><path d="M2 5h1.400M4.600 5h5.400M2 6.900h1.400M4.600 6.900h5.400M2 8.800h1.400M4.600 8.800h5.400" stroke="#4f4f4f" stroke-width="1"/></svg>
<div class="t" style="left:1686px;top:432px;color:#ececec">Project</div>
<svg class="a" style="left:1737px;top:435px" width="10" height="11" viewBox="0 0 10 11"><path d="M0.500 0.500h5L9 4v6.500H0.500zM5.500 0.500V4H9" fill="none" stroke="#d6d6d6" stroke-width="1"/></svg>
<div class="t" style="left:1752px;top:432px;color:#ececec;transform:scaleX(0.842)">Scene</div>
<svg class="a" style="left:1800px;top:435px" width="12" height="11" viewBox="0 0 12 11"><path d="M3.500 0.500h6.500a1.500 1.500 0 0 1 1.500 1.500v3L6 10.500H3.500a3 3 0 0 1-3-3v-4a3 3 0 0 1 3-3zM6 10.500V7a1.500 1.500 0 0 1 1.500-1.500h4" fill="none" stroke="#d6d6d6" stroke-width="1"/></svg>
<div class="t" style="left:1816px;top:432px;color:#ececec;transform:scaleX(0.868)">Labels</div>
<div class="a" style="left:1859px;top:432px;width:16px;height:17px;background:#2a2a2a;border-radius:3px"></div>
<svg class="a" style="left:1862px;top:436px" width="10" height="10" viewBox="0 0 10 10" fill="#3fd681"><rect x="0" y="0" width="3.800" height="3.800"/><rect x="6" y="0" width="3.800" height="3.800"/><rect x="0" y="6" width="3.800" height="3.800"/><rect x="6" y="6" width="3.800" height="3.800"/></svg>
<svg class="a" style="left:1881px;top:436px" width="11" height="9" viewBox="0 0 11 9"><path d="M0 0.500h11M0 4.500h11M0 8.500h11" stroke="#d0d0d0" stroke-width="1"/></svg>
<!-- Alice -->
<div class="a" style="left:1598px;top:453px;width:275px;height:17px;background:#3d3d3d;border:1px solid #555;border-radius:3px"></div>
<div class="t" style="left:1601px;top:453px;color:#ececec">Alice</div>
<svg class="a" style="left:1860px;top:458px" width="10" height="7" viewBox="0 0 10 7"><path d="M1 1l4 4 4-4" fill="none" stroke="#d0d0d0" stroke-width="1.200"/></svg>
<div class="a" style="left:1880px;top:460px;width:2px;height:2px;background:#ddd;box-shadow:5px 0 0 #ddd,10px 0 0 #ddd"></div>
<div class="a" style="left:1598px;top:470px;width:298px;height:15px;background:#262626"></div>
<div class="a" style="left:1600px;top:472px;width:18px;height:12px;background:#3d7ab0;border-radius:3px 3px 0 0"></div>
<div class="a" style="left:1622px;top:472px;width:18px;height:12px;background:#d6dcb8;border-radius:3px 3px 0 0"></div>
<div class="a" style="left:1644px;top:472px;width:18px;height:12px;background:#f0bc5a;border-radius:3px 3px 0 0"></div>
<div class="a" style="left:1666px;top:472px;width:18px;height:12px;background:#c5ad98;border-radius:3px 3px 0 0"></div>
<div class="a" style="left:1688px;top:472px;width:18px;height:12px;background:#e05a55;border-radius:3px 3px 0 0"></div>
<div class="a" style="left:1593px;top:484px;width:321px;height:7px;background:#1b1b1b"></div>
<!-- Align panel -->
<div class="a" style="left:1593px;top:491px;width:321px;height:21px;background:#1b1b1b"></div>
<div class="a" style="left:1593px;top:491px;width:38px;height:21px;background:#444;border-radius:4px 4px 0 0"></div>
<div class="t" style="left:1598.5px;top:493px;color:#ececec;transform:scaleX(0.95)">Align</div>
<div class="a" style="left:1593px;top:512px;width:321px;height:68px;background:#444"></div>
<div class="t" style="left:1601px;top:523px;color:#ececec;transform:scaleX(0.934)">Alignment</div>
<div class="t" style="left:1601px;top:551px;color:#ececec;transform:scaleX(0.984)">Distribution</div>
<div class="a btn" style="left:1790px;top:522px;width:54px;height:18px"></div>
<div class="a btn" style="left:1852px;top:522px;width:54px;height:18px"></div>
<div class="a btn" style="left:1790px;top:550px;width:54px;height:18px"></div>
<svg class="a" style="left:1790px;top:522px" width="116" height="18" viewBox="0 0 116 18" fill="none" stroke="#ececec" stroke-width="1.500"><path d="M3.500 4v10M5 7h9M5 11h6"/><path d="M18 3v12M36 3v12" stroke="#3e3e3e" stroke-width="1"/><path d="M27 3v12M21 7h12M23 11h8"/><path d="M50.500 4v10M40 7h9M43 11h6"/><path d="M80 3v12M98 3v12" stroke="#3e3e3e" stroke-width="1"/><path d="M65 4h11M68.500 5.500v9M72.500 5.500v5"/><path d="M83 9h12M87 4v10M91 6v6"/><path d="M101 14h11M104.500 12.500v-5M108.500 12.500v-9"/></svg>
<svg class="a" style="left:1790px;top:550px" width="54" height="18" viewBox="0 0 54 18" fill="none" stroke="#ececec" stroke-width="1.500"><path d="M18 3v12M36 3v12" stroke="#3e3e3e" stroke-width="1"/><path d="M3.500 4v10M14.500 4v10" stroke-width="1"/><path d="M9 5v8" stroke-width="2.500"/><path d="M21 4h12M21 14h12" stroke-width="1"/><path d="M23 9h8" stroke-width="2.500"/><path d="M39 4h2M39 14h2M49 4h2M49 14h2M39 4v2M51 4v2M39 12v2M51 12v2" stroke-width="1"/><path d="M42 12l2-3M46 9l2-3" stroke-width="2"/></svg>

<!-- ===== TIMELINE ===== -->
<div class="a" style="left:858px;top:608px;width:1056px;height:22px;background:#282828"></div>
<div class="a" style="left:1439px;top:610px;width:470px;height:20px;background:#444;border-radius:4px 4px 0 0"></div>
<svg class="a" style="left:951px;top:615px" width="10" height="10" viewBox="0 0 10 10"><path d="M1 1l8 8M9 1l-8 8" stroke="#a0a0a0" stroke-width="1"/></svg>
<div class="a" style="left:969px;top:615px;width:1px;height:10px;background:#a0a0a0"></div>
<div class="t" style="left:1155px;top:611px;color:#b4b4b4">Composition 2</div>
<svg class="a" style="left:1421px;top:615px" width="10" height="10" viewBox="0 0 10 10"><path d="M1 1l8 8M9 1l-8 8" stroke="#a0a0a0" stroke-width="1"/></svg>
<div class="t" style="left:1625px;top:611px;color:#ececec">Composition 3</div>
<svg class="a" style="left:1891px;top:615px" width="10" height="10" viewBox="0 0 10 10"><path d="M1 1l8 8M9 1l-8 8" stroke="#a0a0a0" stroke-width="1"/></svg>
<div class="a" style="left:858px;top:630px;width:126px;height:22px;background:#3b3b3b"></div>
<div class="a" style="left:858px;top:652px;width:126px;height:20px;background:#444"></div>
<div class="a" style="left:858px;top:672px;width:126px;height:304px;background:#282828"></div>
<div class="a" style="left:858px;top:672px;width:112px;height:132px;background:#383838"></div>
<div class="a" style="left:858px;top:761px;width:110px;height:20px;background:#58533f;border-radius:0 3px 3px 0"></div>
<div class="a btn" style="left:846px;top:632px;width:17px;height:20px"></div>
<div class="a btn" style="left:866px;top:632px;width:20px;height:20px"></div>
<svg class="a" style="left:869px;top:635px" width="15" height="15" viewBox="0 0 15 15" fill="none" stroke="#e4e4e4" stroke-width="1.100"><path d="M0 2.500h3.500M7 2.500h6M0 7h7.500M11 7h2M0 11.500h3.500M7 11.500h6"/><circle cx="5.200" cy="2.500" r="1.600"/><circle cx="9.200" cy="7" r="1.600"/><circle cx="5.200" cy="11.500" r="1.600"/><path d="M15 12v3h-3z" fill="#4fd08d" stroke="none"/></svg>
<div class="a" style="left:888px;top:632px;width:95px;height:20px;background:#262626;border-radius:3px"></div>
<div class="t hs" style="left:893px;top:634px;font-size:12px">F</div>
<div class="t" style="left:906px;top:634px;color:#ececec">107</div>
<div class="a" style="left:930px;top:675px;width:21px;height:16px;background:#2a2a2a;border-radius:4px"></div>
<div class="a" style="left:940px;top:675px;width:1px;height:16px;background:#383838"></div>
<svg class="a" style="left:932px;top:679px" width="18" height="8" viewBox="0 0 18 8"><path d="M6.500 0.500v7H3.500L0.500 4l3-3.500z" fill="#d6b85a"/><path d="M11.500 0.500v7h3L17.500 4l-3-3.500z" fill="#8a8a8a"/></svg>
<div class="a" style="left:956px;top:678px;width:10px;height:10px;border:1px solid #8a8a8a;border-radius:5px"></div>
<div class="a" style="left:930px;top:697px;width:21px;height:16px;background:#2a2a2a;border-radius:4px"></div>
<div class="a" style="left:940px;top:697px;width:1px;height:16px;background:#383838"></div>
<svg class="a" style="left:932px;top:701px" width="18" height="8" viewBox="0 0 18 8"><path d="M6.500 0.500v7H3.500L0.500 4l3-3.500z" fill="#d6b85a"/><path d="M11.500 0.500v7h3L17.500 4l-3-3.500z" fill="#c94fe8"/></svg>
<div class="a" style="left:956px;top:700px;width:10px;height:10px;border:1px solid #8a8a8a;border-radius:5px"></div>
<div class="a" style="left:930px;top:719px;width:21px;height:16px;background:#2a2a2a;border-radius:4px"></div>
<div class="a" style="left:940px;top:719px;width:1px;height:16px;background:#383838"></div>
<svg class="a" style="left:932px;top:723px" width="18" height="8" viewBox="0 0 18 8"><path d="M6.500 0.500v7H3.500L0.500 4l3-3.500z" fill="#8a8a8a"/><path d="M11.500 0.500v7h3L17.500 4l-3-3.500z" fill="#c94fe8"/></svg>
<div class="a" style="left:956px;top:722px;width:10px;height:10px;border:1px solid #8a8a8a;border-radius:5px"></div>
<div class="a" style="left:930px;top:741px;width:21px;height:16px;background:#2a2a2a;border-radius:4px"></div>
<div class="a" style="left:940px;top:741px;width:1px;height:16px;background:#383838"></div>
<svg class="a" style="left:932px;top:745px" width="18" height="8" viewBox="0 0 18 8"><path d="M6.500 0.500v7H3.500L0.500 4l3-3.500z" fill="#d6b85a"/><path d="M11.500 0.500v7h3L17.500 4l-3-3.500z" fill="#c94fe8"/></svg>
<div class="a" style="left:956px;top:744px;width:10px;height:10px;border:1px solid #8a8a8a;border-radius:5px"></div>
<div class="a" style="left:956px;top:766px;width:10px;height:10px;border:1px solid #8a8a8a;border-radius:5px"></div>
<div class="a" style="left:930px;top:785px;width:21px;height:16px;background:#2a2a2a;border-radius:4px"></div>
<div class="a" style="left:940px;top:785px;width:1px;height:16px;background:#383838"></div>
<svg class="a" style="left:932px;top:789px" width="18" height="8" viewBox="0 0 18 8"><path d="M6.500 0.500v7H3.500L0.500 4l3-3.500z" fill="#d6b85a"/><path d="M11.500 0.500v7h3L17.500 4l-3-3.500z" fill="#8a8a8a"/></svg>
<div class="a" style="left:956px;top:788px;width:10px;height:10px;border:1px solid #8a8a8a;border-radius:5px"></div>
<div class="a" style="left:972px;top:673px;width:10px;height:288px;background:#505050;border-radius:5px"></div>
<div class="a" style="left:858px;top:964px;width:111px;height:10px;background:#505050;border-radius:0 5px 5px 0"></div>
<div class="a" style="left:986px;top:807px;width:1px;height:17px;border-left:1.500px dotted #8a8a8a"></div>
<div class="a" style="left:858px;top:976px;width:126px;height:22px;background:#4d4d4d"></div>
<div class="a" style="left:840px;top:978px;width:45px;height:18px;background:#262626;border-radius:3px"></div>
<div class="t" style="left:858px;top:979px;color:#ececec">ditor</div>
<div class="a" style="left:885px;top:978px;width:96px;height:18px;background:#595959;border-radius:3px"></div>
<svg class="a" style="left:893px;top:981px" width="13" height="12" viewBox="0 0 13 12"><path d="M2.500 0v12M0 9.500h13M2.500 9.500L11 2" fill="none" stroke="#e0e0e0" stroke-width="1.100"/></svg>
<div class="t" style="left:910px;top:979px;color:#ececec">Graph Editor</div>
<div class="a" style="left:991px;top:630px;width:923px;height:24px;background:#232323"></div>
<div class="a" style="left:991px;top:654px;width:923px;height:17px;background:#1e1e1e"></div>
<div class="a" style="left:1000px;top:655px;width:905px;height:16px;background:#464646"></div>
<div class="a" style="left:991px;top:671px;width:923px;height:293px;background:#282828"></div>
<div class="a" style="left:991px;top:671px;width:9px;height:293px;background:#1e1e1e"></div>
<div class="a" style="left:1905px;top:671px;width:9px;height:293px;background:#1e1e1e"></div>
<svg class="a" style="left:991px;top:630px" width="923" height="24" viewBox="0 0 923 24"><path d="M8.75 16v8M19.62 20v4M30.48 20v4M41.35 20v4M52.21 20v4M63.08 16v8M73.95 20v4M84.81 20v4M95.68 20v4M106.54 20v4M117.41 16v8M128.28 20v4M139.14 20v4M150.01 20v4M160.87 20v4M171.74 16v8M182.61 20v4M193.47 20v4M204.34 20v4M215.20 20v4M226.07 16v8M236.94 20v4M247.80 20v4M258.67 20v4M269.53 20v4M280.40 16v8M291.27 20v4M302.13 20v4M313.00 20v4M323.86 20v4M334.73 16v8M345.60 20v4M356.46 20v4M367.33 20v4M378.19 20v4M389.06 16v8M399.93 20v4M410.79 20v4M421.66 20v4M432.52 20v4M443.39 16v8M454.26 20v4M465.12 20v4M475.99 20v4M486.85 20v4M497.72 16v8M508.59 20v4M519.45 20v4M530.32 20v4M541.18 20v4M552.05 16v8M562.92 20v4M573.78 20v4M584.65 20v4M595.51 20v4M606.38 16v8M617.25 20v4M628.11 20v4M638.98 20v4M649.84 20v4M660.71 16v8M671.58 20v4M682.44 20v4M693.31 20v4M704.17 20v4M715.04 16v8M725.91 20v4M736.77 20v4M747.64 20v4M758.50 20v4M769.37 16v8M780.24 20v4M791.10 20v4M801.97 20v4M812.83 20v4M823.70 16v8M834.57 20v4M845.43 20v4M856.30 20v4M867.16 20v4M878.03 16v8M888.90 20v4M899.76 20v4M910.63 20v4M921.49 20v4" stroke="#9a9a9a" stroke-width="1" fill="none"/></svg>
<div class="t rl" style="left:978.8px;top:630px">0</div>
<div class="t rl" style="left:1033.1px;top:630px">15</div>
<div class="t rl" style="left:1087.4px;top:630px">30</div>
<div class="t rl" style="left:1141.7px;top:630px">45</div>
<div class="t rl" style="left:1196.1px;top:630px">60</div>
<div class="t rl" style="left:1250.4px;top:630px">75</div>
<div class="t rl" style="left:1304.7px;top:630px">90</div>
<div class="t rl" style="left:1359.1px;top:630px">105</div>
<div class="t rl" style="left:1413.4px;top:630px">120</div>
<div class="t rl" style="left:1467.7px;top:630px">135</div>
<div class="t rl" style="left:1522.0px;top:630px">150</div>
<div class="t rl" style="left:1576.4px;top:630px">165</div>
<div class="t rl" style="left:1630.7px;top:630px">180</div>
<div class="t rl" style="left:1685.0px;top:630px">195</div>
<div class="t rl" style="left:1739.4px;top:630px">210</div>
<div class="t rl" style="left:1793.7px;top:630px">225</div>
<div class="t rl" style="left:1848.0px;top:630px">240</div>
<div class="a" style="left:995px;top:653px;width:5px;height:18px;background:#6fc7ad;border-radius:1px"></div>
<div class="a" style="left:1905px;top:653px;width:5px;height:18px;background:#6fc7ad;border-radius:1px"></div>
<div class="a" style="left:1000px;top:674px;width:905px;height:18px;background:repeating-linear-gradient(135deg,#e0f998 0,#cdf383 1.200px,#cbf181 12.300px,#e0f998 12.600px,#e0f998 13.700px,#bce074 14.100px,#b0d468 25.170px);border-radius:2px"></div>
<div class="t" style="left:1008px;top:674px;color:#1c1c1c;">Oscillator [Position.Z] Cosine</div>
<div class="a" style="left:1000px;top:696px;width:905px;height:18px;background:repeating-linear-gradient(135deg,#e0f998 0,#cdf383 1.200px,#cbf181 12.300px,#e0f998 12.600px,#e0f998 13.700px,#bce074 14.100px,#b0d468 25.170px);border-radius:2px"></div>
<div class="t" style="left:1008px;top:696px;color:#1c1c1c;">Oscillator [Position.X] Sine Driver</div>
<div class="a" style="left:1000px;top:718px;width:905px;height:18px;background:repeating-linear-gradient(135deg,#7fa9fb 0,#6c98ee 1.200px,#6a96ec 12.300px,#7fa9fb 12.600px,#7fa9fb 13.700px,#5d85d6 14.100px,#567ccb 25.170px);border-radius:2px"></div>
<div class="t" style="left:1008px;top:718px;color:#fff;-webkit-text-stroke:.35px #fff;">Index Context [Number]</div>
<div class="a" style="left:1000px;top:740px;width:905px;height:18px;background:repeating-linear-gradient(135deg,#7fa9fb 0,#6c98ee 1.200px,#6a96ec 12.300px,#7fa9fb 12.600px,#7fa9fb 13.700px,#5d85d6 14.100px,#567ccb 25.170px);border-radius:2px"></div>
<div class="t" style="left:1008px;top:740px;color:#fff;-webkit-text-stroke:.35px #fff;">String Generator [String]</div>
<div class="a" style="left:1000px;top:762px;width:905px;height:18px;background-color:#f5e985;background-image:radial-gradient(#cdbc4c 0.800px,transparent 1.050px);background-size:3px 3px;border:1px solid #fffbe0;border-radius:3px"></div>
<div class="t" style="left:1008px;top:762px;color:#1c1c1c;transform:scaleX(.86)">Ellipse Shape</div>
<div class="a" style="left:1000px;top:784px;width:905px;height:18px;background:#b98fff;border-radius:3px"></div>
<div class="t" style="left:1008px;top:784px;color:#fff;-webkit-text-stroke:.35px #fff">Cavalry</div>
<div class="a" style="left:1387px;top:650px;width:1px;height:312px;background:#6fc7ad"></div>
<svg class="a" style="left:1380px;top:643px" width="15" height="11" viewBox="0 0 15 11"><path d="M0.500 0.500h14L7.500 10z" fill="#6fc7ad"/></svg>
<div class="a" style="left:991px;top:964px;width:923px;height:12px;background:#282828"></div>
<div class="a" style="left:993px;top:964px;width:919px;height:10px;background:#505050;border-radius:5px"></div>
<div class="a" style="left:991px;top:976px;width:923px;height:22px;background:#3b3b3b"></div>
<div class="a btn" style="left:994px;top:978px;width:18px;height:18px"></div>
<svg class="a" style="left:996px;top:981px" width="15" height="13" viewBox="0 0 15 13"><path d="M0 1h13M0 5.500h13" stroke="#e4e4e4" stroke-width="1.600"/><path d="M0 10h3M5 10h3M10 10h2" stroke="#e4e4e4" stroke-width="1.600"/><path d="M15 10v3h-3z" fill="#4fd08d"/></svg>
<div class="a" style="left:1015px;top:979px;width:150px;height:16px;background:#2a2a2a;border-radius:3px"></div>
<div class="t" style="left:1017px;top:979px;color:#ececec">Default Keyframe Layer</div>
<div class="a" style="left:1171px;top:979px;width:70px;height:16px;background:#2a2a2a;border-radius:3px"></div>
<div class="t hs" style="left:1176px;top:979px;font-size:12px">F</div>
<div class="t" style="left:1188px;top:979px;color:#bdbdbd">-</div>
<div class="t" style="left:1247px;top:979px;color:#ececec">Align:</div>
<div class="a btn" style="left:1284px;top:978px;width:53px;height:18px"></div>
<div class="a btn" style="left:1341px;top:978px;width:17px;height:18px"></div>
<div class="a btn" style="left:1361px;top:978px;width:31px;height:18px"></div><div class="a vs" style="left:1379px;top:979px;height:16px"></div>
<div class="a btn" style="left:1396px;top:978px;width:31px;height:18px"></div><div class="a vs" style="left:1414px;top:979px;height:16px"></div>
<div class="a" style="left:1362px;top:979px;width:18px;height:16px;background:#454545;border-radius:4px 0 0 4px"></div><div class="a" style="left:1397px;top:979px;width:18px;height:16px;background:#454545;border-radius:4px 0 0 4px"></div>
<svg class="a" style="left:1284px;top:978px" width="145" height="18" viewBox="0 0 145 18" fill="none"><path d="M18 2v14M35.500 2v14" stroke="#3e3e3e" stroke-width="1"/><path d="M2.500 1.500v15M26.500 1.500v15M50.500 1.500v15" stroke="#ececec" stroke-width="1"/><g fill="#6fd6b4"><rect x="5.500" y="5" width="2" height="2"/><rect x="5.500" y="10.800" width="2" height="2"/><rect x="25.500" y="5" width="2" height="2"/><rect x="25.500" y="10.800" width="2" height="2"/><rect x="45.500" y="5" width="2" height="2"/><rect x="45.500" y="10.800" width="2" height="2"/></g><g fill="#ececec"><rect x="8.500" y="5" width="3" height="2"/><rect x="8.500" y="10.800" width="7" height="2"/><rect x="22.500" y="5" width="1.500" height="2"/><rect x="29" y="5" width="1.500" height="2"/><rect x="21" y="10.800" width="3" height="2"/><rect x="29" y="10.800" width="3" height="2"/><rect x="41" y="5" width="3" height="2"/><rect x="37" y="10.800" width="7" height="2"/></g><g stroke="#b0b0b0" stroke-width="1"><rect x="60" y="4" width="10.500" height="10"/><path d="M64.500 9h1.500" stroke-width="1.500"/></g><g fill="#b0b0b0"><rect x="58.500" y="2.500" width="3" height="3"/><rect x="69" y="2.500" width="3" height="3"/><rect x="58.500" y="12.500" width="3" height="3"/><rect x="69" y="12.500" width="3" height="3"/></g><g transform="rotate(-40 86.500 9)"><path d="M83 14.500V8a3.500 3.500 0 0 1 7 0V14.500" stroke="#e4e4e4" stroke-width="2.200"/></g><path d="M100 5.500v7l5-3.500zM135 5.500v7l5-3.500z" stroke="#8a8a8a" stroke-width="0.900"/><path d="M115 9h3M125.500 9h3.500" stroke="#ececec" stroke-width="1"/><path d="M119.500 2.500v13M123.200 6.500v5" stroke="#ececec" stroke-width="1.100"/></svg>
<svg class="a" style="left:1742px;top:979px" width="16" height="16" viewBox="0 0 16 16" fill="none" stroke="#cfcfcf" stroke-width="1.100"><circle cx="7" cy="7" r="5"/><path d="M4.500 7h5M10.800 10.800l3.500 3.500" /></svg>
<div class="a" style="left:1772px;top:985px;width:110px;height:3px;background:#4a4a4a;border-radius:2px"></div>
<div class="a" style="left:1762px;top:982px;width:10px;height:10px;border-radius:5px;background:#7fd6b8;border:1.500px solid #5fae94"></div>
<svg class="a" style="left:1886px;top:979px" width="16" height="16" viewBox="0 0 16 16" fill="none" stroke="#cfcfcf" stroke-width="1.100"><circle cx="7" cy="7" r="5"/><path d="M4.500 7h5M7 4.500v5M10.800 10.800l3.500 3.500"/></svg>
<div class="a" style="left:412px;top:1004px;width:1502px;height:22px;background:#3b3b3b"></div>
<div class="a" style="left:1610px;top:1006px;width:80px;height:18px;background:#c9b466;border-radius:2px"></div>
<div class="t" style="left:1615px;top:1007px;color:#45401f">Feedback</div>
<div class="a" style="left:1693px;top:1006px;width:109px;height:18px;background:#2ecc71;border-radius:2px"></div>
<div class="t" style="left:1698px;top:1007px;color:#14301f">Upgrade to Pro</div>
<div class="a" style="left:1805px;top:1006px;width:106px;height:18px;background:#3aa7f0;border-radius:2px"></div>
<div class="t" style="left:1810px;top:1007px;color:#10283c">Tips and Tricks</div>
<svg class="a" style="left:1671px;top:1008px" width="13" height="14" viewBox="0 0 13 14"><path d="M1 0.500h7l3 3v10H1z" fill="#f4f4f4" stroke="#c8d6c0" stroke-width=".6"/><path d="M2.500 4h5M2.500 6h4" stroke="#c0c0c0" stroke-width=".8"/><path d="M4 11.500l1-2.800 5-5 1.800 1.800-5 5z" fill="#f5853a"/><path d="M10 3.700l1-1 1.800 1.800-1 1z" fill="#e8475a"/></svg>
<svg class="a" style="left:1781px;top:1009px" width="15" height="12" viewBox="0 0 15 12"><path d="M1 6.500c0-2 .8-4.500 2.500-5 1.500-.3 3 1.500 3.300 4v4c0 1.500-1 2-2.800 2S1 10.500 1 8.500z" fill="#f7c331"/><path d="M14 6.500c0-2-.8-4.500-2.500-5-1.500-.3-3 1.500-3.300 4v4c0 1.500 1 2 2.800 2s3-1 3-3z" fill="#f7c331"/><path d="M5 0.300l.5 1M7.500 0v1M10 0.300l-.5 1" stroke="#5fb8e8" stroke-width=".7"/></svg>
<svg class="a" style="left:1891px;top:1008px" width="14" height="14" viewBox="0 0 14 14"><path d="M13.500 0.500c-4-.3-7 1.500-9 5.500l3.500 3.500c4-2 5.800-5 5.500-9z" fill="#e8e8ee"/><path d="M13.500 0.500c-1.500-.1-2.800.1-3.800.6l3.200 3.200c.5-1 .7-2.300.6-3.800z" fill="#e8475a"/><circle cx="9.500" cy="4.500" r="1.300" fill="#5fb8e8"/><path d="M4.500 6L1.500 6.500 3.500 8.500zM8 9.500L7.500 12.500 5.500 10.500z" fill="#e8475a"/><path d="M4 10l-3.500 3.500 1.500.3z" fill="#f7a531"/></svg>
<style>.rl{width:40px;text-align:center;color:#e0e0e0;font-size:13px;transform-origin:50% 50%;transform:scaleX(.95)}</style>
<!-- ===== RIGHT TOOLBAR ICONS ===== -->
<div class="a btn" style="left:1372.5px;top:50.500px;width:27px;height:27px"></div>
<div class="a btn" style="left:1402.5px;top:50.500px;width:27px;height:27px"></div>
<div class="a btn" style="left:1432.5px;top:50.500px;width:27px;height:27px"></div>
<div class="a btn" style="left:1462.5px;top:50.500px;width:27px;height:27px"></div>
<div class="a btn" style="left:1496.5px;top:50.500px;width:27px;height:27px"></div>
<div class="a btn" style="left:1526.5px;top:50.500px;width:27px;height:27px"></div>
<div class="a btn" style="left:1561.5px;top:50.500px;width:27px;height:27px"></div>
<div class="a btn" style="left:1591.5px;top:50.500px;width:27px;height:27px"></div>
<div class="a btn" style="left:1621.5px;top:50.500px;width:27px;height:27px"></div>
<div class="a btn" style="left:1652.5px;top:50.500px;width:27px;height:27px"></div>
<div class="a btn" style="left:1687.5px;top:50.500px;width:27px;height:27px"></div>
<div class="a btn" style="left:1722.5px;top:50.500px;width:27px;height:27px"></div>
<div class="a btn" style="left:1752.5px;top:50.500px;width:27px;height:27px"></div>
<div class="a btn" style="left:1787.5px;top:50.500px;width:27px;height:27px"></div>
<div class="a btn" style="left:1817.5px;top:50.500px;width:27px;height:27px"></div>
<div class="a btn" style="left:1847.5px;top:50.500px;width:27px;height:27px"></div>
<div class="a btn" style="left:1882.5px;top:50.500px;width:27px;height:27px"></div>
<div class="a" style="left:1492px;top:63px;width:3px;height:3px;border-radius:2px;background:#2b2b2b"></div>
<div class="a" style="left:1557px;top:63px;width:3px;height:3px;border-radius:2px;background:#2b2b2b"></div>
<div class="a" style="left:1682px;top:63px;width:3px;height:3px;border-radius:2px;background:#2b2b2b"></div>
<div class="a" style="left:1717px;top:63px;width:3px;height:3px;border-radius:2px;background:#2b2b2b"></div>
<div class="a" style="left:1782px;top:63px;width:3px;height:3px;border-radius:2px;background:#2b2b2b"></div>
<div class="a" style="left:1877px;top:63px;width:3px;height:3px;border-radius:2px;background:#2b2b2b"></div>
<svg class="a" style="left:1375.5px;top:53px" width="21" height="21" viewBox="0 0 21 21"><circle cx="2.9" cy="3.1" r="1.600" fill="#e3d46a"/><circle cx="2.9" cy="10.5" r="1.600" fill="#e3d46a"/><circle cx="2.9" cy="17.9" r="1.600" fill="#e3d46a"/><circle cx="10.4" cy="3.1" r="1.600" fill="#e3d46a"/><circle cx="10.4" cy="10.5" r="1.600" fill="#e3d46a"/><circle cx="10.4" cy="17.9" r="1.600" fill="#e3d46a"/><circle cx="17.9" cy="3.1" r="1.600" fill="#e3d46a"/><circle cx="17.9" cy="10.5" r="1.600" fill="#e3d46a"/><circle cx="17.9" cy="17.9" r="1.600" fill="#e3d46a"/></svg>
<svg class="a" style="left:1405.5px;top:53px" width="21" height="21" viewBox="0 0 21 21"><path d="M1.300 6.400h13.400V19.500H1.300z" fill="#e3d46a"/><path d="M1.300 6.400L6 1.500h13.700L14.700 6.400z" fill="#e8e8e8"/><path d="M14.700 6.400L19.700 1.500V14.800L14.700 19.500z" fill="#c4c4c4"/><path d="M14.700 6.400L19.700 1.500" stroke="#7a7a7a" stroke-width=".5"/></svg>
<svg class="a" style="left:1435.5px;top:53px" width="21" height="21" viewBox="0 0 21 21"><rect x="1.100" y="0.900" width="19" height="19.300" rx="6" fill="none" stroke="#e6e6e6" stroke-width="1"/><rect x="5.500" y="3.500" width="3" height="14" fill="#e3d46a"/><rect x="9.400" y="3.500" width="6.200" height="3" fill="#e3d46a"/><rect x="9.400" y="9.300" width="4.400" height="3.200" fill="#e3d46a"/></svg>
<svg class="a" style="left:1465.5px;top:53px" width="21" height="21" viewBox="0 0 21 21"><circle cx="4" cy="4.100" r="1.700" fill="#e3d46a"/><circle cx="15.100" cy="3.100" r="1.700" fill="#d8d8d8"/><circle cx="8.900" cy="6.800" r="1.700" fill="#d8d8d8"/><circle cx="18" cy="11" r="2.700" fill="#e3d46a"/><circle cx="9.900" cy="14.100" r="2.700" fill="#d8d8d8"/><circle cx="3" cy="15.100" r="1.700" fill="#e3d46a"/><circle cx="16.100" cy="19" r="1.700" fill="#e3d46a"/></svg>
<svg class="a" style="left:1499.5px;top:53px" width="23" height="21" viewBox="0 0 23 21"><path d="M1.400 10.300h2.100M6.500 10.300h4.500M12.500 10.300h8M14.500 3.900l6.800 6.400-6.800 6.800" fill="none" stroke="#8fdc8a" stroke-width="2.100"/></svg>
<svg class="a" style="left:1529.5px;top:53px" width="21" height="21" viewBox="0 0 21 21"><path d="M2.900 0.400v20.300" stroke="#e6e6e6" stroke-width="1"/><rect x="6.500" y="4.400" width="9.100" height="4.900" fill="#8fdc8a"/><rect x="6.500" y="11.600" width="14.100" height="4.800" fill="#8fdc8a"/></svg>
<svg class="a" style="left:1564.5px;top:53px" width="22" height="21" viewBox="0 0 22 21"><path d="M11 3v15M3 10.500h16" stroke="#474b50" stroke-width="4"/><circle cx="11" cy="2.600" r="2.200" fill="#a8d4fa"/><circle cx="11" cy="10.500" r="2.200" fill="#a8d4fa"/><circle cx="11" cy="18.500" r="2.200" fill="#a8d4fa"/><circle cx="3" cy="10.500" r="2.200" fill="#a8d4fa"/><circle cx="19" cy="10.500" r="2.200" fill="#a8d4fa"/></svg>
<svg class="a" style="left:1594.5px;top:53px" width="22" height="21" viewBox="0 0 22 21"><path d="M3 10.500h16" stroke="#474b50" stroke-width="4"/><circle cx="3" cy="10.500" r="2.200" fill="#a8d4fa"/><circle cx="11" cy="10.500" r="2.200" fill="#a8d4fa"/><circle cx="19" cy="10.500" r="2.200" fill="#a8d4fa"/></svg>
<svg class="a" style="left:1624.5px;top:53px" width="21" height="21" viewBox="0 0 21 21"><path d="M14.200 3.500a7 7 0 0 0 0 14" fill="none" stroke="#e6e6e6" stroke-width="1.400"/><path d="M14.200 0.500v6M11.200 3.500h6M14.200 14.500v6M11.200 17.500h6" stroke="#7fc784" stroke-width="1.300"/></svg>
<svg class="a" style="left:1655.5px;top:53px" width="22" height="21" viewBox="0 0 22 21"><path d="M-0.500 5.700h22M-0.500 15.100h22" stroke="#ececec" stroke-width="0.900"/><rect x="0.500" y="7.500" width="4.200" height="6" fill="#e3d46a"/><rect x="6.500" y="7.500" width="8" height="6" fill="#e3d46a"/><rect x="16.500" y="7.500" width="4" height="6" fill="#e3d46a"/></svg>
<svg class="a" style="left:1690.5px;top:53px" width="23" height="21" viewBox="0 0 23 21"><path d="M1.300 6.100L14.500 2.100M8.200 4.300L11.200 16.500" stroke="#e3d46a" stroke-width="3.300" fill="none"/><path d="M1.500 16.700c3 3.200 6.500 1.200 9.500 0.300s6-1.500 10 2.800" fill="none" stroke="#d4d4d4" stroke-width="0.900"/></svg>
<svg class="a" style="left:1725.5px;top:53px" width="21" height="21" viewBox="0 0 21 21"><rect x="0.500" y="1.600" width="20.100" height="1.900" fill="#a8d4fa"/><rect x="0.500" y="5.600" width="4" height="3.800" fill="#d8d8d8"/><rect x="5.500" y="10.600" width="9.100" height="3.800" fill="#d8d8d8"/><rect x="15.400" y="15.500" width="5.200" height="4.100" fill="#d8d8d8"/></svg>
<svg class="a" style="left:1755.5px;top:53px" width="21" height="21" viewBox="0 0 21 21"><rect x="0.500" y="1.600" width="20" height="1.900" fill="#a8d4fa"/><rect x="0.500" y="5.600" width="12" height="3.800" fill="#d8d8d8"/><rect x="4.500" y="10.600" width="12" height="3.800" fill="#d8d8d8"/><rect x="9.500" y="15.500" width="11" height="4.100" fill="#d8d8d8"/></svg>
<svg class="a" style="left:1790px;top:53px" width="23" height="21" viewBox="0 0 23 21"><rect x="0.600" y="2.900" width="21" height="15.100" fill="none" stroke="#ececec" stroke-width="1"/><rect x="3" y="5.800" width="3.900" height="9.400" fill="#e3d46a"/><rect x="9" y="5.800" width="3.900" height="9.400" fill="#e3d46a"/><rect x="15.100" y="5.800" width="4" height="9.400" fill="#e3d46a"/></svg>
<svg class="a" style="left:1820px;top:53px" width="23" height="21" viewBox="0 0 23 21"><rect x="0.600" y="2.900" width="21" height="15.100" fill="none" stroke="#ececec" stroke-width="1"/><rect x="3" y="5.800" width="16" height="3.600" fill="#e3d46a"/><rect x="3" y="11.600" width="16" height="3.600" fill="#e3d46a"/></svg>
<svg class="a" style="left:1850px;top:53px" width="23" height="21" viewBox="0 0 23 21"><rect x="0.600" y="2.900" width="21" height="15.100" fill="none" stroke="#ececec" stroke-width="1"/><rect x="3.100" y="5.800" width="6.800" height="3.600" fill="#e3d46a"/><rect x="12.300" y="5.800" width="6.700" height="3.600" fill="#e3d46a"/><rect x="3.100" y="11.600" width="6.800" height="3.600" fill="#e3d46a"/><rect x="12.300" y="11.600" width="6.700" height="3.600" fill="#e3d46a"/></svg>
<svg class="a" style="left:1885.5px;top:53px" width="21" height="21" viewBox="0 0 21 21"><path d="M2.500 3.700h8" stroke="#d8d8d8" stroke-width="1"/><path d="M0.400 5.800h12.800v8.400l-2.300 2.300H0.400z" fill="#d8d8d8"/><path d="M14.600 10.600L20.500 5.500v10.200z" fill="#d8d8d8"/><circle cx="3.300" cy="8.400" r="1.300" fill="#2b2b2b"/></svg>
<!-- ===== TASKBAR ===== -->
<div class="a" style="left:0;top:1026px;width:1920px;height:6px;background:#1a1a1a"></div>
<div class="a" style="left:0;top:1032px;width:1920px;height:48px;background:linear-gradient(90deg,#f6e4c8,#f8e6c9 55%,#f6e3c6)"></div>
<!-- start -->
<svg class="a" style="left:20px;top:1044px" width="24" height="24" viewBox="0 0 24 24"><defs><linearGradient id="wg" x1="0" y1="0" x2="1" y2="1"><stop offset="0" stop-color="#47c0f6"/><stop offset="1" stop-color="#0f7fd6"/></linearGradient></defs><path d="M1 1h10.500v10.500H1zM12.500 1H23v10.500H12.500zM1 12.500h10.500V23H1zM12.500 12.500H23V23H12.500z" fill="url(#wg)"/></svg>
<!-- search -->
<svg class="a" style="left:64px;top:1044px" width="26" height="26" viewBox="0 0 26 26"><defs><linearGradient id="sg" x1="0" y1="0" x2="1" y2="1"><stop offset="0" stop-color="#3fc9a0"/><stop offset=".35" stop-color="#1e8fe0"/><stop offset="1" stop-color="#1668c8"/></linearGradient></defs><circle cx="11" cy="10.500" r="8.300" fill="#f3e8d6" stroke="url(#sg)" stroke-width="2.800"/><path d="M17.200 17.200l5.800 6" stroke="#1a72d0" stroke-width="3.200" stroke-linecap="round"/></svg>
<!-- task view -->
<svg class="a" style="left:108px;top:1044px" width="26" height="24" viewBox="0 0 26 24"><defs><linearGradient id="tv" x1="0" y1="0" x2="1" y2="1"><stop offset="0" stop-color="#ffffff"/><stop offset="1" stop-color="#bdbdbd"/></linearGradient></defs><rect x="7.500" y="1" width="17.500" height="16" rx="1.500" fill="url(#tv)"/><rect x="1" y="7.500" width="18" height="16" rx="1.500" fill="#242424"/><rect x="7.500" y="7.500" width="11.500" height="9.500" fill="#9c9c9c" opacity=".55"/></svg>
<!-- copilot -->
<svg class="a" style="left:152px;top:1044px" width="26" height="24" viewBox="0 0 26 24"><defs><linearGradient id="cp1" x1="0" y1="0" x2="1" y2="1"><stop offset="0" stop-color="#1fa0e8"/><stop offset=".5" stop-color="#2f6fe8"/><stop offset="1" stop-color="#8a52e0"/></linearGradient><linearGradient id="cp2" x1="0" y1="1" x2="1" y2="0"><stop offset="0" stop-color="#f6c23b"/><stop offset=".45" stop-color="#f0655a"/><stop offset="1" stop-color="#d85ae0"/></linearGradient><linearGradient id="cp3" x1="0" y1="0" x2="0" y2="1"><stop offset="0" stop-color="#35c1d0"/><stop offset="1" stop-color="#7ad04a"/></linearGradient></defs><path d="M9 1.500h7.500c1.800 0 2.800 1 3.300 2.600L22 11c.8 2.500 1 3.500 3 3.500-1 3-2.500 3.500-4.500 3.500H17l-3-11c-.6-2-1.500-2.500-3.500-2.500H7C7.500 2.500 8 1.500 9 1.500z" fill="url(#cp1)"/><path d="M1 9.500C2 6.500 3.500 6 5.500 6H9l-3.500 12.500c-.6 2-1.500 2.500-3.500 2.500C.5 21 .3 19 1 16.500z" fill="url(#cp3)"/><path d="M17 22.500H9.500c-1.800 0-2.800-1-3.300-2.600L5.500 18l3-10.500c.5-1.500 1.300-1.500 2.500-1.500l2.500 9c.6 2 1.500 2.500 3.500 2.500H22c-.8 3-2 5-5 5z" fill="url(#cp2)"/></svg>
<!-- explorer -->
<svg class="a" style="left:196px;top:1044px" width="26" height="24" viewBox="0 0 26 24"><path d="M1 3a2 2 0 0 1 2-2h6l3 3h11a2 2 0 0 1 2 2v3H1z" fill="#e9a825"/><rect x="1" y="6" width="24" height="17" rx="2" fill="#fcd24c"/><rect x="1" y="17" width="24" height="6" rx="2" fill="#f2b830"/><rect x="8" y="15.500" width="10" height="6" rx="1.500" fill="#1e7fd6"/></svg>
<!-- store -->
<svg class="a" style="left:240px;top:1043px" width="26" height="27" viewBox="0 0 26 27"><path d="M8 7V4.500a2.500 2.500 0 0 1 2.500-2.500h5a2.500 2.500 0 0 1 2.500 2.500V7" fill="none" stroke="#2a9df4" stroke-width="2"/><rect x="1" y="6" width="24" height="20" rx="3" fill="#0f4fa0"/><rect x="7.500" y="11" width="5" height="5" fill="#f25022"/><rect x="13.500" y="11" width="5" height="5" fill="#7fba00"/><rect x="7.500" y="17" width="5" height="5" fill="#00a4ef"/><rect x="13.500" y="17" width="5" height="5" fill="#ffb900"/></svg>
<!-- git-like diamond -->
<svg class="a" style="left:283px;top:1043px" width="28" height="28" viewBox="0 0 28 28"><g transform="rotate(45 14 14)"><rect x="4.500" y="4.500" width="9" height="9" rx="1.500" fill="#f26d6d"/><rect x="14.500" y="4.500" width="9" height="9" rx="1.500" fill="#7ac26a"/><rect x="4.500" y="14.500" width="9" height="9" rx="1.500" fill="#8fb7f0"/><rect x="14.500" y="14.500" width="9" height="9" rx="1.500" fill="#fbe36a"/></g></svg>
<!-- terminal -->
<svg class="a" style="left:328px;top:1045px" width="25" height="22" viewBox="0 0 25 22"><rect x="0" y="0" width="25" height="22" rx="2.500" fill="#2d2d2d"/><rect x="0" y="0" width="25" height="5" rx="2" fill="#4a4a4a"/><path d="M4 9l4 3.500-4 3.500" fill="none" stroke="#fff" stroke-width="1.800"/><path d="M10 17.500h6" stroke="#fff" stroke-width="1.800"/></svg>
<!-- chrome -->
<svg class="a" style="left:372px;top:1043px" width="26" height="26" viewBox="0 0 26 26"><circle cx="13" cy="13" r="12.500" fill="#fbc116"/><path d="M13 13L2.200 6.700A12.500 12.500 0 0 1 23.800 6.700z" fill="#e33b2e"/><path d="M13 13L2.200 6.700A12.500 12.500 0 0 0 13 25.500z" fill="#31a350"/><circle cx="13" cy="13" r="5.600" fill="#fff"/><circle cx="13" cy="13" r="4.400" fill="#2a7de1"/></svg>
<!-- running indicators -->
<div class="a ri" style="left:206px"></div><div class="a ri" style="left:294px"></div><div class="a ri" style="left:338px"></div><div class="a ri" style="left:382px"></div><div class="a ri" style="left:426px"></div><div class="a ri" style="left:470px"></div><div class="a ri" style="left:558px"></div><div class="a ri" style="left:602px"></div>
<!-- edge, vscode, cavalry(active), obs-ish, calc: only bottoms visible below menu (y>1058) -->
<div class="a" style="left:498px;top:1036px;width:38px;height:40px;background:#fbf3e6;border-radius:4px"></div>
<div class="a" style="left:509px;top:1072px;width:16px;height:3px;border-radius:2px;background:#1e7fd6"></div>
<svg class="a" style="left:416px;top:1044px" width="26" height="26" viewBox="0 0 26 26"><circle cx="13" cy="13" r="12" fill="#1a6fd0"/><path d="M3 16c2 6 12 7 17 3-5 2-10 0-10-5 0-3 3-5 6-4 4 1 5 4 8 3C24 5 14 0 7 5 3 8 2 12 3 16z" fill="#3cc5e8"/></svg>
<svg class="a" style="left:460px;top:1044px" width="26" height="26" viewBox="0 0 26 26"><path d="M19 1l6 3v18l-6 3L4 13z" fill="#1f8ad2"/><path d="M19 1L2 17l-2-2 4-2.500L0 10l2-2 17 17z" fill="#2a9df4"/></svg>
<svg class="a" style="left:507px;top:1043px" width="20" height="22" viewBox="0 0 22 24"><rect x="0" y="0" width="22" height="24" rx="5" fill="#151515"/><path d="M15.500 8A5.500 5.500 0 1 0 15.500 16" fill="none" stroke="#999" stroke-width="2"/></svg>
<svg class="a" style="left:548px;top:1044px" width="26" height="26" viewBox="0 0 26 26"><circle cx="13" cy="13" r="12" fill="#3a2d4a"/><circle cx="13" cy="13" r="11" fill="none" stroke="#8a5ac8" stroke-width="2"/><path d="M9 7l10 6-10 6z" fill="#ddd"/></svg>
<svg class="a" style="left:596px;top:1045px" width="18" height="23" viewBox="0 0 22 24" preserveAspectRatio="none"><rect x="0" y="0" width="22" height="24" rx="2" fill="#4a6fa8"/><rect x="3" y="13" width="4.500" height="4" fill="#cfd8e6"/><rect x="8.800" y="13" width="4.500" height="4" fill="#cfd8e6"/><rect x="14.600" y="13" width="4.500" height="4" fill="#cfd8e6"/><rect x="3" y="18.500" width="4.500" height="4" fill="#cfd8e6"/><rect x="8.800" y="18.500" width="4.500" height="4" fill="#cfd8e6"/><rect x="14.600" y="18.500" width="4.500" height="4" fill="#cfd8e6"/></svg>
<!-- tray -->
<svg class="a" style="left:1640px;top:1051px" width="12" height="8" viewBox="0 0 12 8"><path d="M1 7l5-5 5 5" fill="none" stroke="#1b1b1b" stroke-width="1.400"/></svg>
<svg class="a" style="left:1671px;top:1049px" width="14" height="14" viewBox="0 0 14 14" fill="none" stroke="#1b1b1b" stroke-width="1.700"><path d="M0 4h14M0 10h14"/><path d="M9 1v6M5 7v6" stroke-width="2.400"/></svg>
<svg class="a" style="left:1702px;top:1050px" width="15" height="12" viewBox="0 0 15 12" fill="none" stroke="#1b1b1b" stroke-width="1.800"><path d="M1 0.500v11M14 0.500v11M3.500 2l4 6 4-6" /></svg>
<svg class="a" style="left:1733px;top:1048px" width="17" height="14" viewBox="0 0 17 14" fill="none" stroke="#1b1b1b" stroke-width="1.200"><path d="M1 5a11 11 0 0 1 15 0M3.500 8a7.500 7.500 0 0 1 10 0M6 10.800a3.800 3.800 0 0 1 5 0"/><circle cx="8.500" cy="12.500" r="1" fill="#1b1b1b" stroke="none"/></svg>
<svg class="a" style="left:1757px;top:1048px" width="18" height="15" viewBox="0 0 18 15" fill="none" stroke="#1b1b1b" stroke-width="1.200"><path d="M1 5.500h2.500l4-3.500v11l-4-3.500H1z"/><path d="M10 5a3.500 3.500 0 0 1 0 5M12.500 3a6.500 6.500 0 0 1 0 9M15 1a9.500 9.500 0 0 1 0 13"/></svg>
<svg class="a" style="left:1781px;top:1047px" width="18" height="15" viewBox="0 0 18 15" fill="none" stroke="#1b1b1b" stroke-width="1.200"><rect x="1" y="5" width="13.500" height="8" rx="1.500"/><rect x="3" y="7" width="9.500" height="4" fill="#1b1b1b" stroke="none"/><path d="M16 7.500v3M3 4c0-2 1-3 2.500-3M5 1.500l2 1.500"/></svg>
<div class="t" style="left:1808px;top:1039px;width:69px;text-align:right;color:#1b1b1b;font-size:11.800px;transform:none">08.31</div>
<div class="t" style="left:1808px;top:1055px;width:69px;text-align:right;color:#1b1b1b;font-size:12.100px;transform:none">28/09/2025</div>
<svg class="a" style="left:1885px;top:1047px" width="16" height="18" viewBox="0 0 16 18"><path d="M2 12c1.500-1.500 1.500-3 1.500-5.500a4.500 4.500 0 0 1 9 0c0 2.500 0 4 1.500 5.500v1H2z" fill="#1b1b1b"/><path d="M6 15a2 2 0 0 0 4 0z" fill="#1b1b1b"/><path d="M11 1h3.500L11 5h3.500" fill="none" stroke="#1b1b1b" stroke-width="1"/><path d="M6.500 7h3L6.500 10.500h3" fill="none" stroke="#f6e4c9" stroke-width="1"/></svg>
<style>.ri{top:1072px;width:6px;height:3px;border-radius:2px;background:#8a8276}</style>

<!-- ===== CREATE MENU ===== -->
<div class="a" style="left:169px;top:43px;width:223px;height:286px;background:#262626;box-shadow:2px 3px 4px rgba(0,0,0,.5)"></div>
<div class="a" style="left:168px;top:23px;width:46px;height:20px;background:linear-gradient(#5e5e5e,#545454);border:1px solid #3a3a3a"></div>
<div class="t" style="left:173.5px;top:24px;color:#b9b9b9">Create</div>
<div class="a sp" style="top:67px"></div><div class="a sp" style="top:92px"></div><div class="a sp" style="top:163px"></div><div class="a sp" style="top:257px"></div><div class="a sp" style="top:282px"></div>
<div class="a" style="left:171px;top:233px;width:221px;height:23px;background:linear-gradient(#6c6c6c,#626262)"></div>
<div class="t mi" style="left:191px;top:46px;transform:scaleX(0.875)">Add Layers Popover...</div><div class="t mi" style="left:340px;top:46px;transform:scaleX(0.96)">Ctrl+.</div>
<div class="t mi" style="left:191px;top:71px;transform:scaleX(0.947)">Primitives</div>
<div class="t mi" style="left:191px;top:96px">Text</div>
<div class="t mi" style="left:191px;top:119px">Background</div><div class="t mi" style="left:340px;top:119px;transform:scaleX(0.973)">Ctrl+Y</div>
<div class="t mi" style="left:191px;top:142px;transform:scaleX(0.883)">Camera</div><div class="t mi" style="left:340px;top:142px;transform:scaleX(1.0)">Ctrl+M</div>
<div class="t mi" style="left:191px;top:167px;transform:scaleX(0.847)">Shapes</div>
<div class="t mi" style="left:191px;top:190px">Behaviours</div>
<div class="t mi" style="left:191px;top:213px">Effects</div>
<div class="t mi" style="left:191px;top:236px;transform:scaleX(0.986)">Utilities</div>
<div class="t mi" style="left:191px;top:261px">Layout</div>
<div class="t mi" style="left:191px;top:286px">Text Animation Presets</div>
<div class="t mi" style="left:191px;top:309px;transform:scaleX(0.864)">Demo Scenes</div>
<svg class="a" style="left:383px;top:70px" width="5" height="260" viewBox="0 0 5 260" fill="#b8b8b8"><path d="M0.500 5.500v7l4-3.500z"/><path d="M0.500 101.500v7l4-3.500z"/><path d="M0.500 124.500v7l4-3.500z"/><path d="M0.500 147.500v7l4-3.500z"/><path d="M0.500 170.500v7l4-3.500z"/><path d="M0.500 195.500v7l4-3.500z"/><path d="M0.500 220.500v7l4-3.500z"/><path d="M0.500 243.500v7l4-3.500z"/></svg>
<style>.sp{left:169px;width:223px;height:1px;background:#494949}</style>

<div class="a" id="utilmenu" style="left:392px;top:0;width:466px;height:1058px;background:#262626;box-shadow:2px 2px 3px rgba(0,0,0,.55)">
<div class="t mi" style="left:22px;top:3px">Accumulator (Pro)</div>
<div class="t mi" style="left:22px;top:26px;transform:scaleX(0.946)">Animation Control</div>
<div class="t mi" style="left:22px;top:49px;transform:scaleX(0.896)">Apply Character Spacing</div>
<div class="t mi" style="left:22px;top:72px;transform:scaleX(0.887)">Apply Font Size</div>
<div class="t mi" style="left:22px;top:95px;transform:scaleX(0.906)">Apply Font Style</div>
<div class="t mi" style="left:22px;top:118px;transform:scaleX(0.907)">Apply OpenType</div>
<div class="t mi" style="left:22px;top:141px;transform:scaleX(0.935)">Apply Text Material</div>
<div class="t mi" style="left:22px;top:164px;transform:scaleX(0.9)">Apply Typeface</div>
<div class="t mi" style="left:22px;top:187px;transform:scaleX(0.925)">Asset Array</div>
<div class="t mi" style="left:22px;top:210px;transform:scaleX(0.888)">Asset From Smart Folder (Pro)</div>
<div class="t mi" style="left:22px;top:233px;transform:scaleX(0.933)">Attractor Field (Pro)</div>
<div class="t mi" style="left:22px;top:256px;transform:scaleX(0.896)">Body Settings Collision Event (Pro)</div>
<div class="t mi" style="left:22px;top:279px;transform:scaleX(0.904)">Bounding Box</div>
<div class="t mi" style="left:22px;top:302px">Bounding Box Constraint</div>
<div class="t mi" style="left:22px;top:325px">Bridge Constraint (Pro)</div>
<div class="t mi" style="left:22px;top:348px;transform:scaleX(0.879)">Camera (Pro)</div>
<div class="t mi" style="left:22px;top:371px;transform:scaleX(0.882)">Camera Guide (Pro)</div>
<div class="t mi" style="left:22px;top:394px;transform:scaleX(0.946)">Color Array</div>
<div class="t mi" style="left:22px;top:417px;transform:scaleX(0.904)">Color Collision Event (Pro)</div>
<div class="t mi" style="left:22px;top:440px;transform:scaleX(0.937)">Color Info</div>
<div class="t mi" style="left:22px;top:463px">Comparison</div>
<div class="t mi" style="left:22px;top:486px;transform:scaleX(0.926)">Component Constraint</div>
<div class="t mi" style="left:22px;top:509px;transform:scaleX(0.929)">Composition Constraint</div>
<div class="t mi" style="left:22px;top:532px;transform:scaleX(0.931)">Contrasting Color</div>
<div class="t mi" style="left:22px;top:555px;transform:scaleX(0.897)">Count Sub-Meshes</div>
<div class="t mi" style="left:22px;top:578px">Direction Field (Pro)</div>
<div class="t mi" style="left:22px;top:601px">Distance Constraint (Pro)</div>
<div class="t mi" style="left:22px;top:624px;transform:scaleX(0.889)">Drag Field (Pro)</div>
<div class="t mi" style="left:22px;top:647px;transform:scaleX(0.972)">Falloff</div>
<div class="t mi" style="left:22px;top:670px">Fill</div>
<div class="t mi" style="left:22px;top:693px;transform:scaleX(0.898)">Get Name</div>
<div class="t mi" style="left:22px;top:716px;transform:scaleX(0.9)">Get Sub-Mesh Transform</div>
<div class="t mi" style="left:22px;top:739px;transform:scaleX(0.902)">HSV Color</div>
<div class="t mi" style="left:22px;top:762px;transform:scaleX(0.878)">If Else</div>
<div class="t mi" style="left:22px;top:785px;transform:scaleX(0.876)">Image Sampler</div>
<div class="t mi" style="left:22px;top:808px;transform:scaleX(0.896)">Impulse Collision Event (Pro)</div>
<div class="t mi" style="left:22px;top:831px;transform:scaleX(0.921)">Index Context</div>
<div class="t mi" style="left:22px;top:854px;transform:scaleX(0.907)">Index To Color</div>
<div class="t mi" style="left:22px;top:877px">JavaScript Utility (Pro)</div>
<div class="t mi" style="left:22px;top:900px;transform:scaleX(0.897)">Jsmath</div>
<div class="t mi" style="left:22px;top:923px;transform:scaleX(0.86)">Layer Seed</div>
<div class="t mi" style="left:22px;top:946px">Length Context</div>
<div class="t mi" style="left:22px;top:969px;transform:scaleX(0.892)">Local Time</div>
<div class="t mi" style="left:22px;top:992px;transform:scaleX(0.875)">Logic</div>
<div class="t mi" style="left:22px;top:1015px;transform:scaleX(0.982)">Math</div>
<div class="t mi" style="left:22px;top:1038px;transform:scaleX(0.98)">Math2</div>
<div class="t mi" style="left:255px;top:3px;transform:scaleX(0.982)">Math3</div>
<div class="t mi" style="left:255px;top:26px;transform:scaleX(0.919)">Measure</div>
<div class="t mi" style="left:255px;top:49px">Measure Text</div>
<div class="t mi" style="left:255px;top:72px;transform:scaleX(0.973)">Null</div>
<div class="t mi" style="left:255px;top:95px;transform:scaleX(0.896)">Path Length</div>
<div class="t mi" style="left:255px;top:118px;transform:scaleX(0.909)">Pin Constraint (Pro)</div>
<div class="t mi" style="left:255px;top:141px;transform:scaleX(0.874)">Radius (Pro)</div>
<div class="t mi" style="left:255px;top:164px;transform:scaleX(0.887)">Range Falloff (Pro)</div>
<div class="t mi" style="left:255px;top:187px;transform:scaleX(0.92)">Rig Control</div>
<div class="t mi" style="left:255px;top:210px;transform:scaleX(0.887)">Scheduling Group (Pro)</div>
<div class="t mi" style="left:255px;top:233px;transform:scaleX(0.86)">Seconds To Frames</div>
<div class="t mi" style="left:255px;top:256px;transform:scaleX(0.867)">Sequence</div>
<div class="t mi" style="left:255px;top:279px">Shader Array</div>
<div class="t mi" style="left:255px;top:302px;transform:scaleX(0.897)">Shape Array</div>
<div class="t mi" style="left:255px;top:325px;transform:scaleX(0.892)">Spreadsheet</div>
<div class="t mi" style="left:255px;top:348px;transform:scaleX(0.893)">Spreadsheet Lookup</div>
<div class="t mi" style="left:255px;top:371px;transform:scaleX(0.898)">Sticky Collision Event (Pro)</div>
<div class="t mi" style="left:255px;top:394px;transform:scaleX(0.936)">String</div>
<div class="t mi" style="left:255px;top:417px;transform:scaleX(0.935)">String Array</div>
<div class="t mi" style="left:255px;top:440px;transform:scaleX(0.902)">String From Asset</div>
<div class="t mi" style="left:255px;top:463px;transform:scaleX(0.921)">String Generator</div>
<div class="t mi" style="left:255px;top:486px;transform:scaleX(0.908)">String Length</div>
<div class="t mi" style="left:255px;top:509px;transform:scaleX(0.94)">String Manipulator</div>
<div class="t mi" style="left:255px;top:532px">Stroke</div>
<div class="t mi" style="left:255px;top:555px">Stroke Duplicator (Pro)</div>
<div class="t mi" style="left:255px;top:578px">Timeline Counter (Pro)</div>
<div class="t mi" style="left:255px;top:601px;transform:scaleX(0.925)">Transform Constraint</div>
<div class="t mi" style="left:255px;top:624px;transform:scaleX(0.887)">Typeface</div>
<div class="t mi" style="left:255px;top:647px">Typeface Array</div>
<div class="t mi" style="left:255px;top:670px">Value Array</div>
<div class="t mi" style="left:255px;top:693px;transform:scaleX(0.935)">Value2 Array</div>
<div class="t mi" style="left:255px;top:716px;transform:scaleX(0.935)">Value3 Array</div>
<div class="t mi" style="left:255px;top:739px">Visibility Collision Event (Pro)</div>
</div>
<!-- ===== highlights ===== -->
<div class="a" style="left:393px;top:390px;width:231px;height:25px;background:linear-gradient(#707070,#666)"></div>
<div class="t mi" style="left:414px;top:394px;color:#d0d0d0;transform:scaleX(.946)">Color Array</div>
<div class="a gb" style="left:390px;top:387px;width:237px;height:31px"></div>
<div class="a gb" style="left:168px;top:225px;width:228px;height:40px"></div>
<div class="a gb" style="left:165px;top:19px;width:56px;height:29px"></div>
<style>.gb{border:3px solid #a9e51e}</style>

</body></html>
